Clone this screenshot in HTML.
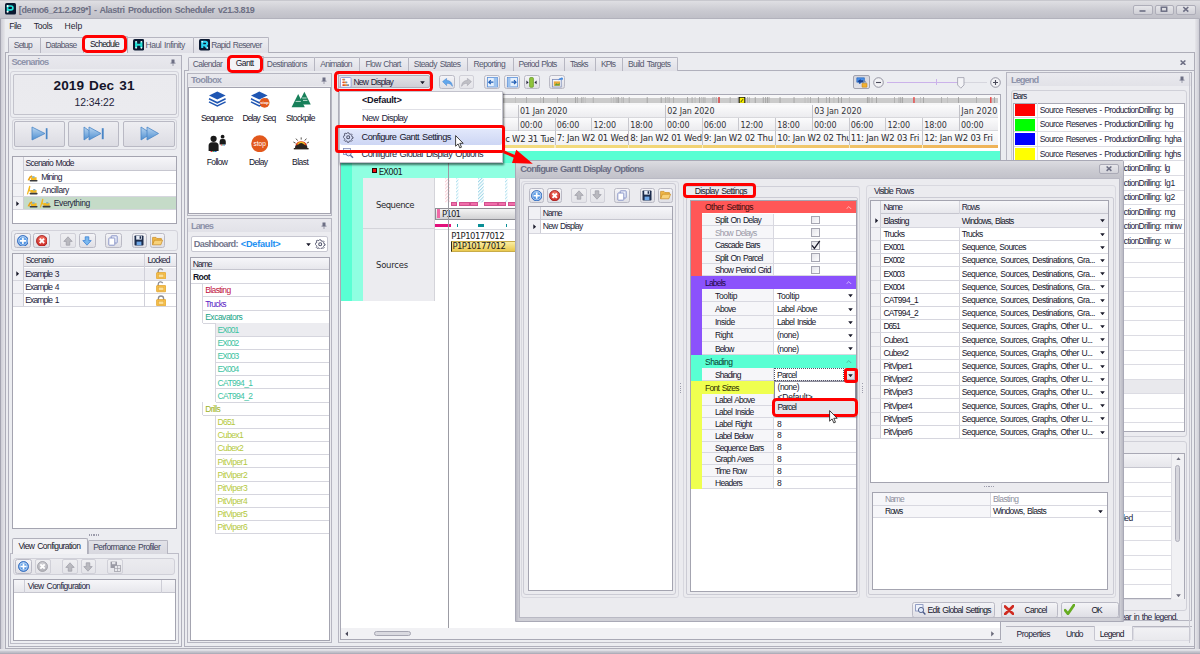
<!DOCTYPE html>
<html><head><meta charset="utf-8"><title>Alastri Production Scheduler</title>
<style>
html,body{margin:0;padding:0}
body{width:1200px;height:654px;overflow:hidden;position:relative;background:#ebecf0;font-family:"Liberation Sans",sans-serif;color:#23233a}
#app{position:absolute;left:0;top:0;width:1200px;height:654px;overflow:hidden}
#app div,#app span,#app svg{position:absolute;box-sizing:border-box}
.t{white-space:nowrap;letter-spacing:-0.46px;word-spacing:1.1px;color:#23233a}
.g{white-space:nowrap;font-family:"DejaVu Sans","Liberation Sans",sans-serif;letter-spacing:-0.1px;color:#2a2a2a}
.b{font-weight:bold}
.btn{background:linear-gradient(#f4f4f7,#dfdfe5);border:1px solid #babac5;border-radius:2.5px}
.btnd{background:linear-gradient(#efeff2,#e4e4e9);border:1px solid #d0d0d8;border-radius:2px}
.grid{background:#fff;border:1px solid #a4a4b0}
.hdr{background:linear-gradient(#f6f6f9,#e7e7ec);border-bottom:1px solid #c6c6cf}
.grp{border:1px solid #cfcfd8;border-radius:2px}
.pnl{border:1px solid #b6b6c1}
.tab{background:linear-gradient(#eeeef2,#dfdfe6);border:1px solid #b6b6c1;border-bottom:none;border-radius:1.5px 1.5px 0 0}
.taba{background:#f3f3f6;border:1px solid #b0b0bb;border-bottom:none;border-radius:2px 2px 0 0}
.red{border:3px solid #ff0000;border-radius:4px}
</style></head><body><div id="app">
<div style="left:0px;top:0px;width:1200px;height:19px;background:linear-gradient(#dfdfe3,#c9c9d0 60%,#c0c0c8);border-bottom:1px solid #b2b2bc;border-top:1px solid #c8c8ce"></div>
<div style="left:0px;top:19px;width:5px;height:635px;background:linear-gradient(90deg,#a4a4b0 0,#a4a4b0 1px,#cfcfd7 1.2px,#e6e6ea 100%)"></div>
<div style="left:1195px;top:19px;width:5px;height:635px;background:linear-gradient(270deg,#a4a4b0 0,#a4a4b0 1px,#cfcfd7 1.2px,#e6e6ea 100%)"></div>
<div style="left:0px;top:648.6px;width:1200px;height:5.4px;background:linear-gradient(#e6e6ea 0,#e2e2e8 25%,#c4c4cd 55%,#bcbcc6 78%,#a2a2ae 100%)"></div>
<svg style="left:5px;top:3.3px;" width="11" height="11.5" viewBox="0 0 11 11.5"><rect x="0" y="0" width="11" height="11.5" rx="1.6" fill="#0a1830"/><path d="M2.6 8.8V3h3.4a1.9 1.9 0 0 1 0 3.8H3.4" fill="none" stroke="#22e6de" stroke-width="1.7"/><circle cx="2.6" cy="3" r="1" fill="#fff"/><circle cx="2.6" cy="8.7" r="1" fill="#fff"/></svg>
<span class="t b" style="left:18.8px;top:5px;font-size:9px;line-height:10px;color:#6d6f84;letter-spacing:-0.39px;">[demo6_21.2.829*] - Alastri Production Scheduler v21.3.819</span>
<div style="left:1133px;top:4.5px;width:19.5px;height:10px;background:linear-gradient(#e6e6ea,#cfcfd6);border:1px solid #aeaeb9;border-radius:2px"></div>
<div style="left:1154.5px;top:4.5px;width:19.5px;height:10px;background:linear-gradient(#e6e6ea,#cfcfd6);border:1px solid #aeaeb9;border-radius:2px"></div>
<div style="left:1176px;top:4.5px;width:19.5px;height:10px;background:linear-gradient(#e6e6ea,#cfcfd6);border:1px solid #aeaeb9;border-radius:2px"></div>
<svg style="left:1133px;top:4px" width="63" height="11" viewBox="0 0 63 11"><rect x="6.5" y="6.2" width="6" height="1.6" fill="#6d6f84"/><rect x="28.3" y="3.2" width="5.4" height="4" fill="none" stroke="#6d6f84" stroke-width="1.5"/><path d="M50.3 3l5 4.6M55.3 3l-5 4.6" stroke="#6d6f84" stroke-width="1.6"/></svg>
<span class="t" style="left:9.2px;top:21px;font-size:8.6px;line-height:10px;color:#1f1f33;letter-spacing:-0.52px;">File</span>
<span class="t" style="left:33.7px;top:21px;font-size:8.6px;line-height:10px;color:#1f1f33;letter-spacing:-0.27px;">Tools</span>
<span class="t" style="left:64.5px;top:21px;font-size:8.6px;line-height:10px;color:#1f1f33;letter-spacing:0px;">Help</span>
<div style="left:5px;top:52px;width:1190px;height:597px;border:1px solid #adadb8;background:#ebecf0"></div>
<div class="tab" style="left:7.5px;top:37px;width:33.1px;height:16px"></div>
<div class="tab" style="left:39.8px;top:37px;width:43.8px;height:16px"></div>
<div class="tab" style="left:127px;top:37px;width:66.6px;height:16px"></div>
<div class="tab" style="left:192.8px;top:37px;width:76.6px;height:16px"></div>
<div class="taba" style="left:82.8px;top:36px;width:44.8px;height:17px"></div>
<span class="t" style="left:13.8px;top:40px;font-size:8.5px;line-height:10px;color:#55586e;letter-spacing:-0.83px;">Setup</span>
<span class="t" style="left:45.5px;top:40px;font-size:8.5px;line-height:10px;color:#55586e;letter-spacing:-0.67px;">Database</span>
<span class="t" style="left:90px;top:39px;font-size:8.5px;line-height:10px;color:#15152a;letter-spacing:-0.82px;">Schedule</span>
<span class="t" style="left:145.5px;top:40px;font-size:8.5px;line-height:10px;color:#55586e;letter-spacing:-0.48px;">Haul Infinity</span>
<span class="t" style="left:211.3px;top:40px;font-size:8.5px;line-height:10px;color:#55586e;letter-spacing:-0.71px;">Rapid Reserver</span>
<svg style="left:132.5px;top:39px;" width="11.5" height="11.5" viewBox="0 0 11.5 11.5"><rect width="11.5" height="11.5" rx="1.8" fill="#0a1830"/><path d="M3.1 2.6v6.4M8.4 2.6v6.4M3.1 5.8h5.3" stroke="#22e2d8" stroke-width="2.1" fill="none"/><circle cx="3.1" cy="2.7" r="0.8" fill="#fff"/><circle cx="8.4" cy="2.7" r="0.8" fill="#fff"/><circle cx="3.1" cy="8.9" r="0.8" fill="#fff"/><circle cx="8.4" cy="8.9" r="0.8" fill="#fff"/></svg>
<svg style="left:198.8px;top:39px;" width="11.5" height="11.5" viewBox="0 0 11.5 11.5"><rect width="11.5" height="11.5" rx="1.8" fill="#0a1830"/><path d="M3.2 9V2.8h3.2a1.7 1.7 0 0 1 0 3.4H3.6M5.6 6l2.8 3" stroke="#2ed4f2" stroke-width="2.1" fill="none"/><circle cx="3.2" cy="2.8" r="0.8" fill="#fff"/><circle cx="8.4" cy="9" r="0.8" fill="#fff"/></svg>
<div class="red" style="left:81.8px;top:34.5px;width:45.2px;height:18.8px;border-width:3.7px;border-radius:5px"></div>
<div style="left:7.5px;top:55px;width:174.5px;height:592px;border:1px solid #b0b0bc;background:#ecedf1"></div>
<div style="left:8.5px;top:56px;width:172.5px;height:13px;background:linear-gradient(#e9e9ee,#e3e3e9)"></div>
<span class="t b" style="left:11.4px;top:57px;font-size:9.3px;line-height:10px;color:#8e93aa;letter-spacing:-0.82px;">Scenarios</span>
<svg style="left:169.5px;top:59px;" width="6" height="7" viewBox="0 0 6 7"><path d="M1.5 0.5h3v3.2h1v0.9H3.3V7h-0.6V4.6H0.5V3.7h1z" fill="#6d6f84"/></svg>
<div style="left:10px;top:71px;width:168.5px;height:46.5px;border:1px solid #d3d3db;border-radius:3px"></div>
<div style="left:12.6px;top:73.5px;width:164px;height:41.9px;border:1px solid #c3c3cc;border-radius:2px;background:linear-gradient(#eaeaee,#ebebef)"></div>
<span class="t b" style="left:53.5px;top:78px;font-size:13.6px;line-height:15px;color:#15152a;letter-spacing:0.09px;">2019 Dec 31</span>
<span class="t" style="left:74.5px;top:97px;font-size:10.4px;line-height:11px;color:#23233a;letter-spacing:-0.06px;">12:34:22</span>
<div style="left:11.5px;top:118.5px;width:165.5px;height:31px;border:1px solid #d3d3db;border-radius:3px"></div>
<div style="left:14.3px;top:120.6px;width:50.5px;height:26.2px;background:linear-gradient(#eeeef2,#dcdce3);border:1px solid #b9b9c4;border-radius:2px"></div>
<div style="left:68.1px;top:120.6px;width:51px;height:26.2px;background:linear-gradient(#eeeef2,#dcdce3);border:1px solid #b9b9c4;border-radius:2px"></div>
<div style="left:122.5px;top:120.6px;width:52.1px;height:26.2px;background:linear-gradient(#eeeef2,#dcdce3);border:1px solid #b9b9c4;border-radius:2px"></div>
<svg style="left:31px;top:126px;" width="18" height="15" viewBox="0 0 18 15"><defs><linearGradient id="pb" x1="0" y1="0" x2="0" y2="1"><stop offset="0" stop-color="#b9d6f2"/><stop offset="1" stop-color="#4f8fd0"/></linearGradient></defs><path d="M1 1l13 6.5L1 14z" fill="url(#pb)" stroke="#4a86c6" stroke-width="0.8"/><rect x="14.8" y="2.2" width="1.7" height="11" fill="#4a86c6"/></svg>
<svg style="left:83px;top:126px;" width="22" height="15" viewBox="0 0 22 15"><path d="M1 1l9 6.5L1 14z" fill="url(#pb)" stroke="#4a86c6" stroke-width="0.8"/><path d="M6 1l12 6.5L6 14z" fill="url(#pb)" stroke="#4a86c6" stroke-width="0.8"/><rect x="18.8" y="2.2" width="1.9" height="11" fill="#4a86c6"/></svg>
<svg style="left:140px;top:126px;" width="20" height="15" viewBox="0 0 20 15"><path d="M1 1l10 6.5L1 14z" fill="url(#pb)" stroke="#4a86c6" stroke-width="0.8"/><path d="M7 1l11.5 6.5L7 14z" fill="url(#pb)" stroke="#4a86c6" stroke-width="0.8"/></svg>
<div class="grid" style="left:12px;top:156px;width:165px;height:68px"></div>
<div class="hdr" style="left:13px;top:157px;width:163px;height:13.5px"></div>
<div style="left:13px;top:157px;width:10.6px;height:52.5px;background:#f1f1f5;border-right:1px solid #cdcdd6"></div>
<div style="left:13px;top:182.8px;width:163px;height:1px;background:#d6d6de"></div>
<div style="left:13px;top:195.8px;width:163px;height:1px;background:#d6d6de"></div>
<div style="left:13px;top:208.8px;width:163px;height:1px;background:#d6d6de"></div>
<div style="left:23.6px;top:196.8px;width:152.4px;height:12.2px;background:#c5dbc8"></div>
<span class="t" style="left:25.6px;top:158px;font-size:8.5px;line-height:10px;letter-spacing:-0.78px;">Scenario Mode</span>
<span class="t" style="left:41.2px;top:172px;font-size:8.5px;line-height:10px;letter-spacing:-0.77px;">Mining</span>
<span class="t" style="left:41.3px;top:185px;font-size:8.5px;line-height:10px;letter-spacing:-0.53px;">Ancillary</span>
<span class="t" style="left:53.8px;top:198px;font-size:8.5px;line-height:10px;letter-spacing:-0.42px;">Everything</span>
<svg style="left:27px;top:173.5px;" width="11" height="8" viewBox="0 0 11 8"><path d="M0.5 6.2l2-3.6 2.2-1.4 1 1.2-1.8 1-1.6 3z" fill="#e8a21a"/><rect x="4" y="3.2" width="5.6" height="2.8" fill="#f2b822"/><rect x="5.2" y="2.2" width="2.4" height="1.6" fill="#7fb0c8"/><rect x="2.6" y="6" width="8" height="1.6" rx="0.8" fill="#3a3a3a"/></svg>
<svg style="left:26px;top:185px;" width="12" height="10" viewBox="0 0 12 10"><path d="M0.8 9.2L3.2 0.8l1.2 0.3-0.6 4 2 0.8-0.4 1.2-2.4-0.8-1 3.2z" fill="#f2b822"/><rect x="4.6" y="5" width="6" height="2.8" fill="#f2b822"/><rect x="7.2" y="4" width="2.2" height="1.6" fill="#7fb0c8"/><rect x="3.6" y="7.8" width="8" height="1.7" rx="0.8" fill="#3a3a3a"/></svg>
<svg style="left:27px;top:199.5px;" width="11" height="8" viewBox="0 0 11 8"><path d="M0.5 6.2l2-3.6 2.2-1.4 1 1.2-1.8 1-1.6 3z" fill="#e8a21a"/><rect x="4" y="3.2" width="5.6" height="2.8" fill="#f2b822"/><rect x="5.2" y="2.2" width="2.4" height="1.6" fill="#7fb0c8"/><rect x="2.6" y="6" width="8" height="1.6" rx="0.8" fill="#3a3a3a"/></svg>
<svg style="left:38.6px;top:198px;" width="12" height="10" viewBox="0 0 12 10"><path d="M0.8 9.2L3.2 0.8l1.2 0.3-0.6 4 2 0.8-0.4 1.2-2.4-0.8-1 3.2z" fill="#f2b822"/><rect x="4.6" y="5" width="6" height="2.8" fill="#f2b822"/><rect x="7.2" y="4" width="2.2" height="1.6" fill="#7fb0c8"/><rect x="3.6" y="7.8" width="8" height="1.7" rx="0.8" fill="#3a3a3a"/></svg>
<svg style="left:16.4px;top:200.6px;" width="3.4" height="5.4" viewBox="0 0 3.4 5.4"><path d="M0.3 0.2l2.8 2.5-2.8 2.5z" fill="#1a1a2a"/></svg>
<div style="left:11px;top:230.4px;width:166.5px;height:20.9px;border:1px solid #d3d3db;border-radius:3px"></div>
<div class="btn" style="left:14.3px;top:233.3px;width:16.5px;height:14.4px"></div>
<svg style="left:16.6px;top:234.6px;" width="11.8" height="11.8" viewBox="0 0 11.8 11.8"><defs><radialGradient id="gp1" cx="0.5" cy="0.35" r="0.75"><stop offset="0" stop-color="#7ab4f0"/><stop offset="1" stop-color="#2c74d2"/></radialGradient></defs><circle cx="5.9" cy="5.9" r="5.4" fill="url(#gp1)" stroke="#245fb6" stroke-width="0.8"/><circle cx="5.9" cy="5.9" r="4.25" fill="none" stroke="#fff" stroke-opacity="0.8" stroke-width="0.7"/><path d="M2.8 5.9h6.2M5.9 2.8v6.2" stroke="#fff" stroke-width="1.6"/></svg>
<div class="btn" style="left:33.3px;top:233.3px;width:16.6px;height:14.4px"></div>
<svg style="left:35.7px;top:234.6px;" width="11.8" height="11.8" viewBox="0 0 11.8 11.8"><defs><radialGradient id="gx2" cx="0.5" cy="0.3" r="0.8"><stop offset="0" stop-color="#f47a68"/><stop offset="1" stop-color="#c41a1a"/></radialGradient></defs><circle cx="5.9" cy="5.9" r="5.4" fill="url(#gx2)" stroke="#a01212" stroke-width="0.8"/><path d="M3.7 3.7l4.4 4.4M8.1 3.7l-4.4 4.4" stroke="#fff" stroke-width="1.9"/></svg>
<div class="btnd" style="left:59.7px;top:233.3px;width:16.1px;height:14.4px"></div>
<svg style="left:62.8px;top:235.5px;" width="10" height="10" viewBox="0 0 10 10"><path d="M5 0.8l4.2 4.6H6.8v3.8H3.2V5.4H0.8z" fill="#b9b9bf" stroke="#9c9ca6" stroke-width="0.7"/></svg>
<div class="btn" style="left:79px;top:233.3px;width:16.6px;height:14.4px"></div>
<svg style="left:82.3px;top:235.5px;" width="10" height="10" viewBox="0 0 10 10"><path d="M5 9.2L0.8 4.6h2.4V0.8h3.6v3.8h2.4z" fill="#7ab8ee" stroke="#2f79d2" stroke-width="0.7"/></svg>
<div class="btn" style="left:105px;top:233.3px;width:16.5px;height:14.4px"></div>
<svg style="left:108.3px;top:235px;" width="10" height="11" viewBox="0 0 10 11"><rect x="3.2" y="0.8" width="6" height="7.2" rx="0.6" fill="#eef1fa" stroke="#7f8cc4" stroke-width="0.9"/><rect x="0.8" y="3" width="6" height="7.2" rx="0.6" fill="#ffffff" stroke="#7f8cc4" stroke-width="0.9"/></svg>
<div class="btn" style="left:132px;top:233.3px;width:14.8px;height:14.4px"></div>
<svg style="left:134.4px;top:235px;" width="10" height="11" viewBox="0 0 10 11"><rect x="0.5" y="0.5" width="9" height="10" rx="0.8" fill="#1c2c4c"/><rect x="2.2" y="0.8" width="5.6" height="3.8" fill="#e8eef8"/><rect x="2.6" y="6.6" width="4.8" height="3.6" fill="#6fa8e8"/><rect x="5.6" y="1.2" width="1.4" height="2.6" fill="#1c2c4c"/></svg>
<div class="btn" style="left:149.7px;top:233.3px;width:15.2px;height:14.4px"></div>
<svg style="left:151.8px;top:235.5px;" width="11" height="10" viewBox="0 0 11 10"><path d="M0.6 8.8V1.4h3.4l1 1.2h4.4v1.6" fill="#f0b848" stroke="#c88a20" stroke-width="0.7"/><path d="M0.6 8.8L2.4 4.2h8.2L8.8 8.8z" fill="#f8d27a" stroke="#c88a20" stroke-width="0.7"/></svg>
<div class="grid" style="left:12px;top:253px;width:165px;height:275.5px"></div>
<div class="hdr" style="left:13px;top:254px;width:163px;height:13.4px"></div>
<div style="left:13px;top:254px;width:10.6px;height:52.5px;background:#f1f1f5;border-right:1px solid #cdcdd6"></div>
<div style="left:23.6px;top:267.6px;width:152.4px;height:12.4px;background:#ececf1"></div>
<div style="left:13px;top:279.8px;width:163px;height:1px;background:#d6d6de"></div>
<div style="left:13px;top:292.9px;width:163px;height:1px;background:#d6d6de"></div>
<div style="left:13px;top:305.9px;width:163px;height:1px;background:#d6d6de"></div>
<div style="left:144px;top:254px;width:1px;height:52.5px;background:#d0d0d9"></div>
<span class="t" style="left:25.7px;top:255px;font-size:8.5px;line-height:10px;letter-spacing:-0.75px;">Scenario</span>
<span class="t" style="left:147.5px;top:255px;font-size:8.5px;line-height:10px;letter-spacing:-0.9px;">Locked</span>
<span class="t" style="left:25.2px;top:269px;font-size:8.5px;line-height:10px;letter-spacing:-0.86px;">Example 3</span>
<span class="t" style="left:25.2px;top:282px;font-size:8.5px;line-height:10px;letter-spacing:-0.86px;">Example 4</span>
<span class="t" style="left:25.2px;top:295px;font-size:8.5px;line-height:10px;letter-spacing:-0.86px;">Example 1</span>
<svg style="left:16.4px;top:271.3px;" width="3.4" height="5.4" viewBox="0 0 3.4 5.4"><path d="M0.3 0.2l2.8 2.5-2.8 2.5z" fill="#1a1a2a"/></svg>
<svg style="left:156px;top:268px;" width="10.4" height="11.4" viewBox="0 0 10.4 11.4"><path d="M2.2 5.2V3.2a2.4 2.4 0 0 1 4.5-1.1" fill="none" stroke="#8c8c92" stroke-width="1.3"/><rect x="0.6" y="4.6" width="9.2" height="6.2" rx="0.6" fill="#f7c04c" stroke="#dc9c20" stroke-width="0.7"/><rect x="2.6" y="6.2" width="5.2" height="3" fill="#fbe09a" stroke="#e0a838" stroke-width="0.5"/></svg>
<svg style="left:156px;top:281.2px;" width="10.4" height="11.4" viewBox="0 0 10.4 11.4"><path d="M2.2 5.2V3.2a2.4 2.4 0 0 1 4.5-1.1" fill="none" stroke="#8c8c92" stroke-width="1.3"/><rect x="0.6" y="4.6" width="9.2" height="6.2" rx="0.6" fill="#f7c04c" stroke="#dc9c20" stroke-width="0.7"/><rect x="2.6" y="6.2" width="5.2" height="3" fill="#fbe09a" stroke="#e0a838" stroke-width="0.5"/></svg>
<svg style="left:156px;top:294.6px;" width="10.4" height="11.4" viewBox="0 0 10.4 11.4"><path d="M2.4 5.2V3.6a2.6 2.6 0 0 1 5.2 0v1.6" fill="none" stroke="#8c8c92" stroke-width="1.3"/><rect x="0.6" y="4.6" width="9.2" height="6.2" rx="0.6" fill="#f7c04c" stroke="#dc9c20" stroke-width="0.7"/><rect x="2.6" y="6.2" width="5.2" height="3" fill="#fbe09a" stroke="#e0a838" stroke-width="0.5"/></svg>
<div style="left:89px;top:534.4px;width:1.2px;height:1.2px;background:#9c9cab"></div>
<div style="left:91.2px;top:534.4px;width:1.2px;height:1.2px;background:#9c9cab"></div>
<div style="left:93.4px;top:534.4px;width:1.2px;height:1.2px;background:#9c9cab"></div>
<div style="left:95.6px;top:534.4px;width:1.2px;height:1.2px;background:#9c9cab"></div>
<div style="left:97.8px;top:534.4px;width:1.2px;height:1.2px;background:#9c9cab"></div>
<div style="left:10.2px;top:553.4px;width:168.8px;height:91px;border:1px solid #bdbdc8;background:#edeef2"></div>
<div class="tab" style="left:87.7px;top:540px;width:80px;height:14px;background:linear-gradient(#e2e2e8,#d8d8df)"></div>
<div class="taba" style="left:12.3px;top:538.4px;width:75.6px;height:16px;background:#f2f2f5"></div>
<span class="t" style="left:18.4px;top:541px;font-size:8.5px;line-height:10px;color:#15152a;letter-spacing:-0.57px;">View Configuration</span>
<span class="t" style="left:93.2px;top:542px;font-size:8.5px;line-height:10px;color:#3c3f58;letter-spacing:-0.6px;">Performance Profiler</span>
<div style="left:13.3px;top:557.9px;width:162px;height:17.6px;border:1px solid #d0d0d8;border-radius:3px;background:linear-gradient(#ebebef,#e5e5ea)"></div>
<div class="btn" style="left:15.4px;top:559.3px;width:16.4px;height:14.5px"></div>
<svg style="left:18.1px;top:561px;" width="11" height="11" viewBox="0 0 11 11"><defs><radialGradient id="gp3" cx="0.5" cy="0.35" r="0.75"><stop offset="0" stop-color="#7ab4f0"/><stop offset="1" stop-color="#2c74d2"/></radialGradient></defs><circle cx="5.5" cy="5.5" r="5" fill="url(#gp3)" stroke="#245fb6" stroke-width="0.8"/><circle cx="5.5" cy="5.5" r="3.85" fill="none" stroke="#fff" stroke-opacity="0.8" stroke-width="0.7"/><path d="M2.4 5.5h6.2M5.5 2.4v6.2" stroke="#fff" stroke-width="1.6"/></svg>
<div class="btnd" style="left:34.8px;top:559.3px;width:16px;height:14.5px"></div>
<svg style="left:37.3px;top:561px;" width="11" height="11" viewBox="0 0 11 11"><defs><radialGradient id="gx4" cx="0.5" cy="0.3" r="0.8"><stop offset="0" stop-color="#d4d4d8"/><stop offset="1" stop-color="#a8a8b0"/></radialGradient></defs><circle cx="5.5" cy="5.5" r="5" fill="url(#gx4)" stroke="#9a9aa2" stroke-width="0.8"/><path d="M3.3 3.3l4.4 4.4M7.7 3.3l-4.4 4.4" stroke="#fff" stroke-width="1.9"/></svg>
<div class="btnd" style="left:61.5px;top:559.3px;width:16px;height:14.5px"></div>
<svg style="left:64.5px;top:561.5px;" width="10" height="10" viewBox="0 0 10 10"><path d="M5 0.8l4.2 4.6H6.8v3.8H3.2V5.4H0.8z" fill="#b9b9bf" stroke="#9c9ca6" stroke-width="0.7"/></svg>
<div class="btnd" style="left:80.5px;top:559.3px;width:15.8px;height:14.5px"></div>
<svg style="left:83.4px;top:561.5px;" width="10" height="10" viewBox="0 0 10 10"><path d="M5 9.2L0.8 4.6h2.4V0.8h3.6v3.8h2.4z" fill="#b9b9bf" stroke="#9c9ca6" stroke-width="0.7"/></svg>
<div class="btnd" style="left:107px;top:559.3px;width:16.4px;height:14.5px"></div>
<svg style="left:110px;top:561px;" width="11" height="11" viewBox="0 0 11 11"><rect x="0.6" y="0.6" width="6.4" height="6.4" fill="#9a9aa4"/><rect x="2" y="1" width="3.4" height="2.2" fill="#e4e4e8"/><rect x="4.6" y="4.6" width="5.8" height="5.8" fill="#e8e8ec" stroke="#9a9aa4" stroke-width="0.7"/><path d="M7.5 4.6v5.8M4.6 7.5h5.8" stroke="#9a9aa4" stroke-width="0.6"/></svg>
<div class="grid" style="left:13.3px;top:579.4px;width:162.3px;height:61.2px"></div>
<div class="hdr" style="left:14.3px;top:580.4px;width:160.3px;height:13px"></div>
<div style="left:24.4px;top:580.4px;width:1px;height:13px;background:#cdcdd6"></div>
<div style="left:160.5px;top:580.4px;width:1px;height:13px;background:#cdcdd6"></div>
<span class="t" style="left:27.7px;top:581px;font-size:8.5px;line-height:10px;letter-spacing:-0.57px;">View Configuration</span>
<div style="left:184.4px;top:70.2px;width:1010.1px;height:576.8px;border:1px solid #b0b0bc;border-right:none;background:#ebecf0"></div>
<div class="tab" style="left:187.8px;top:57px;width:41px;height:13.7px;border-radius:1.5px 1.5px 0 0;"></div>
<span class="t" style="left:192.8px;top:59px;font-size:8.5px;line-height:10px;color:#55586e;letter-spacing:-0.64px;">Calendar</span>
<div class="taba" style="left:227.8px;top:56px;width:36px;height:15px;border-radius:1.5px 1.5px 0 0;"></div>
<span class="t" style="left:235.7px;top:58px;font-size:8.5px;line-height:10px;color:#15152a;letter-spacing:-0.57px;">Gantt</span>
<div class="tab" style="left:262.8px;top:57px;width:52.4px;height:13.7px;border-radius:1.5px 1.5px 0 0;"></div>
<span class="t" style="left:266.8px;top:59px;font-size:8.5px;line-height:10px;color:#55586e;letter-spacing:-0.55px;">Destinations</span>
<div class="tab" style="left:314.2px;top:57px;width:45.6px;height:13.7px;border-radius:1.5px 1.5px 0 0;"></div>
<span class="t" style="left:320.3px;top:59px;font-size:8.5px;line-height:10px;color:#55586e;letter-spacing:-0.7px;">Animation</span>
<div class="tab" style="left:358.8px;top:57px;width:50.4px;height:13.7px;border-radius:1.5px 1.5px 0 0;"></div>
<span class="t" style="left:365.4px;top:59px;font-size:8.5px;line-height:10px;color:#55586e;letter-spacing:-0.69px;">Flow Chart</span>
<div class="tab" style="left:408.2px;top:57px;width:60px;height:13.7px;border-radius:1.5px 1.5px 0 0;"></div>
<span class="t" style="left:413.8px;top:59px;font-size:8.5px;line-height:10px;color:#55586e;letter-spacing:-0.57px;">Steady States</span>
<div class="tab" style="left:467.2px;top:57px;width:46.4px;height:13.7px;border-radius:1.5px 1.5px 0 0;"></div>
<span class="t" style="left:473.4px;top:59px;font-size:8.5px;line-height:10px;color:#55586e;letter-spacing:-0.56px;">Reporting</span>
<div class="tab" style="left:512.6px;top:57px;width:52.6px;height:13.7px;border-radius:1.5px 1.5px 0 0;"></div>
<span class="t" style="left:518.5px;top:59px;font-size:8.5px;line-height:10px;color:#55586e;letter-spacing:-0.74px;">Period Plots</span>
<div class="tab" style="left:564.2px;top:57px;width:32px;height:13.7px;border-radius:1.5px 1.5px 0 0;"></div>
<span class="t" style="left:570px;top:59px;font-size:8.5px;line-height:10px;color:#55586e;letter-spacing:-0.78px;">Tasks</span>
<div class="tab" style="left:595.2px;top:57px;width:28px;height:13.7px;border-radius:1.5px 1.5px 0 0;"></div>
<span class="t" style="left:601px;top:59px;font-size:8.5px;line-height:10px;color:#55586e;letter-spacing:-1px;">KPIs</span>
<div class="tab" style="left:622.2px;top:57px;width:56.3px;height:13.7px;border-radius:1.5px 1.5px 0 0;"></div>
<span class="t" style="left:628px;top:59px;font-size:8.5px;line-height:10px;color:#55586e;letter-spacing:-0.59px;">Build Targets</span>
<div class="red" style="left:227px;top:55.2px;width:36px;height:18.3px;border-width:3.6px;border-radius:5px"></div>
<svg style="left:1180px;top:59.5px;" width="6" height="5.4" viewBox="0 0 6 5.4"><path d="M0.6 0.5l4.8 4.4M5.4 0.5L0.6 4.9" stroke="#6d6f84" stroke-width="1.5"/></svg>
<div style="left:187px;top:72.6px;width:145.4px;height:143px;border:1px solid #b6b6c1;background:#ececf0"></div>
<div style="left:188px;top:73.6px;width:143.4px;height:12.4px;background:linear-gradient(#e9e9ee,#e2e2e8)"></div>
<span class="t b" style="left:191px;top:75px;font-size:9.3px;line-height:10px;color:#8e93aa;letter-spacing:-0.74px;">Toolbox</span>
<svg style="left:321px;top:76.5px;" width="6" height="7" viewBox="0 0 6 7"><path d="M1.5 0.5h3v3.2h1v0.9H3.3V7h-0.6V4.6H0.5V3.7h1z" fill="#6d6f84"/></svg>
<div style="left:188.4px;top:87px;width:142.4px;height:127px;background:#fff;border:1px solid #a4a4b0"></div>
<svg style="left:208.4px;top:91px;" width="18.6" height="16.6" viewBox="0 0 18.6 16.6"><path d="M9.3 0.6L17.6 4.6 9.3 8.6 1 4.6z" fill="#1f56b3"/><path d="M1 7.8l8.3 4 8.3-4M1 10.9l8.3 4 8.3-4" fill="none" stroke="#1f56b3" stroke-width="1.5"/></svg>
<svg style="left:249.8px;top:91px;" width="20" height="17" viewBox="0 0 20 17"><path d="M9.3 0.6L17.6 4.6 9.3 8.6 1 4.6z" fill="#1f56b3"/><path d="M1 7.8l8.3 4 8.3-4M1 10.9l8.3 4 8.3-4" fill="none" stroke="#1f56b3" stroke-width="1.5"/><circle cx="14.6" cy="11.8" r="4.9" fill="#e2581c"/><text x="14.6" y="13.2" font-size="4" fill="#fff" text-anchor="middle" font-family="Liberation Sans, sans-serif" font-weight="bold">stop</text></svg>
<svg style="left:291px;top:91px;" width="20.4" height="17" viewBox="0 0 20.4 17"><path d="M0.6 16.2L7.2 3l6.6 13.2z" fill="#17805a"/><path d="M9 9.4L13.4 0.8l6.4 12.6h-8.4z" fill="#17805a"/><path d="M4.6 10.4h5.2M11.2 7h4.4M12 9.4h4.4" stroke="#cfe9dd" stroke-width="0.9"/></svg>
<span class="t" style="left:200.9px;top:113px;font-size:8.5px;line-height:10px;color:#15152a;letter-spacing:-0.83px;">Sequence</span>
<span class="t" style="left:242.4px;top:113px;font-size:8.5px;line-height:10px;color:#15152a;letter-spacing:-0.82px;">Delay Seq</span>
<span class="t" style="left:286px;top:113px;font-size:8.5px;line-height:10px;color:#15152a;letter-spacing:-0.62px;">Stockpile</span>
<svg style="left:207.6px;top:133.6px;" width="19.6" height="18.6" viewBox="0 0 19.6 18.6"><circle cx="5.6" cy="4.8" r="3.1" fill="#1a1a1a"/><path d="M0.6 17v-5.2a3.6 3.6 0 0 1 3.6-3.6h2.8a3.6 3.6 0 0 1 3.6 3.6V17z" fill="#1a1a1a"/><circle cx="14.6" cy="2.7" r="1.9" fill="#1a1a1a"/><path d="M11.6 10.6V7.4a2.3 2.3 0 0 1 2.3-2.3h1.6a2.3 2.3 0 0 1 2.3 2.3v3.2z" fill="#1a1a1a"/><rect x="2.6" y="17" width="2" height="1.2" fill="#e23"/><rect x="4.6" y="17" width="2" height="1.2" fill="#3a6"/><rect x="6.6" y="17" width="2" height="1.2" fill="#36c"/><rect x="12.8" y="10.6" width="1.4" height="0.9" fill="#e23"/><rect x="14.2" y="10.6" width="1.4" height="0.9" fill="#3a6"/><rect x="15.6" y="10.6" width="1.4" height="0.9" fill="#36c"/></svg>
<svg style="left:250.6px;top:134.8px;" width="17.4" height="17.4" viewBox="0 0 17.4 17.4"><circle cx="8.7" cy="8.7" r="8.5" fill="#e2581c"/><text x="8.7" y="11" font-size="6.6" fill="#fff" text-anchor="middle" font-family="Liberation Sans, sans-serif">stop</text></svg>
<svg style="left:293px;top:137px;" width="16.4" height="12.6" viewBox="0 0 16.4 12.6"><path d="M2 11.2a6.2 6.2 0 0 1 12.4 0z" fill="#2a2420"/><path d="M3.2 8.2a5.6 5.6 0 0 1 10 0" fill="none" stroke="#d9351c" stroke-width="1.5"/><path d="M4.6 7.4a4.2 4.2 0 0 1 7.2 0" fill="none" stroke="#f0c020" stroke-width="1.1"/><path d="M8.2 0.4v2.2M3 1.6l1.6 2M13.4 1.6l-1.6 2M0.4 5l2.2 1.2M16 5l-2.2 1.2" stroke="#2a2420" stroke-width="0.8"/><rect x="0.8" y="11" width="14.8" height="1.4" fill="#2a2420"/></svg>
<span class="t" style="left:206.8px;top:157px;font-size:8.5px;line-height:10px;color:#15152a;letter-spacing:-0.67px;">Follow</span>
<span class="t" style="left:249px;top:157px;font-size:8.5px;line-height:10px;color:#15152a;letter-spacing:-0.68px;">Delay</span>
<span class="t" style="left:292px;top:157px;font-size:8.5px;line-height:10px;color:#15152a;letter-spacing:-0.48px;">Blast</span>
<div style="left:187px;top:218px;width:145.4px;height:425px;border:1px solid #b6b6c1;background:#ececf0"></div>
<div style="left:188px;top:219px;width:143.4px;height:12.8px;background:linear-gradient(#e9e9ee,#e2e2e8)"></div>
<span class="t b" style="left:191px;top:221px;font-size:9.3px;line-height:10px;color:#8e93aa;letter-spacing:-1px;">Lanes</span>
<svg style="left:321px;top:222.2px;" width="6" height="7" viewBox="0 0 6 7"><path d="M1.5 0.5h3v3.2h1v0.9H3.3V7h-0.6V4.6H0.5V3.7h1z" fill="#6d6f84"/></svg>
<div style="left:190.6px;top:236.2px;width:137.6px;height:15.4px;background:#fff;border:1px solid #c6c6d0;border-radius:2px"></div>
<span class="t b" style="left:193.8px;top:239px;font-size:9.2px;line-height:10px;color:#74778c;letter-spacing:-0.7px;">Dashboard:</span>
<span class="t b" style="left:240.8px;top:239px;font-size:9.2px;line-height:10px;color:#2390f2;letter-spacing:-0.26px;">&lt;Default&gt;</span>
<svg style="left:306.2px;top:242.6px;" width="5" height="3.4" viewBox="0 0 5 3.4"><path d="M0.2 0.2h4.6L2.5 3.2z" fill="#1a1a2a"/></svg>
<svg style="left:315.4px;top:238.6px;" width="10.4" height="10.4" viewBox="0 0 12 12"><g fill="none" stroke="#50536b" stroke-width="1.2"><circle cx="6" cy="6" r="1.7"/><path d="M6 0.8l1 0.2 0.4 1.4 1.2 0.5 1.3-0.7 1.1 1.1-0.7 1.3 0.5 1.2 1.4 0.4v1.6l-1.4 0.4-0.5 1.2 0.7 1.3-1.1 1.1-1.3-0.7-1.2 0.5-0.4 1.4H5l-0.4-1.4-1.2-0.5-1.3 0.7-1.1-1.1 0.7-1.3-0.5-1.2L-0.2 6.8V5.2l1.4-0.4 0.5-1.2L1 2.3l1.1-1.1 1.3 0.7 1.2-0.5L5 0.8z" transform="translate(0.6,0.2) scale(0.9)"/></g></svg>
<div class="grid" style="left:189.6px;top:256.6px;width:140px;height:384px"></div>
<div class="hdr" style="left:190.6px;top:257.6px;width:138px;height:12.9px"></div>
<span class="t" style="left:192.8px;top:259px;font-size:8.5px;line-height:10px;letter-spacing:-1px;">Name</span>
<div style="left:190.6px;top:283.17px;width:138px;height:1px;background:#d6d6de"></div>
<span class="t b" style="left:193px;top:272px;font-size:8.6px;line-height:10px;color:#15152a;letter-spacing:-0.66px;">Root</span>
<div style="left:202.6px;top:296.33px;width:126px;height:1px;background:#d6d6de"></div>
<div style="left:202.1px;top:283.67px;width:1px;height:13.16px;background:#d6d6de"></div>
<span class="t" style="left:205.2px;top:285px;font-size:8.5px;line-height:10px;color:#c0123c;letter-spacing:-0.61px;">Blasting</span>
<div style="left:202.6px;top:309.5px;width:126px;height:1px;background:#d6d6de"></div>
<div style="left:202.1px;top:296.83px;width:1px;height:13.16px;background:#d6d6de"></div>
<span class="t" style="left:205.2px;top:299px;font-size:8.5px;line-height:10px;color:#5a22c4;letter-spacing:-0.76px;">Trucks</span>
<div style="left:202.6px;top:322.66px;width:126px;height:1px;background:#d6d6de"></div>
<div style="left:202.1px;top:310px;width:1px;height:13.16px;background:#d6d6de"></div>
<span class="t" style="left:205.2px;top:312px;font-size:8.5px;line-height:10px;color:#17a386;letter-spacing:-0.49px;">Excavators</span>
<div style="left:215.5px;top:323.16px;width:113.1px;height:13.17px;background:#ececf0"></div>
<div style="left:215.5px;top:335.82px;width:113.1px;height:1px;background:#d6d6de"></div>
<div style="left:215px;top:323.16px;width:1px;height:13.16px;background:#d6d6de"></div>
<span class="t" style="left:217.6px;top:325px;font-size:8.5px;line-height:10px;color:#3cc3a2;letter-spacing:-1px;">EX001</span>
<div style="left:215.5px;top:348.99px;width:113.1px;height:1px;background:#d6d6de"></div>
<div style="left:215px;top:336.32px;width:1px;height:13.16px;background:#d6d6de"></div>
<span class="t" style="left:217.6px;top:338px;font-size:8.5px;line-height:10px;color:#3cc3a2;letter-spacing:-1px;">EX002</span>
<div style="left:215.5px;top:362.16px;width:113.1px;height:1px;background:#d6d6de"></div>
<div style="left:215px;top:349.49px;width:1px;height:13.16px;background:#d6d6de"></div>
<span class="t" style="left:217.6px;top:351px;font-size:8.5px;line-height:10px;color:#3cc3a2;letter-spacing:-1px;">EX003</span>
<div style="left:215.5px;top:375.32px;width:113.1px;height:1px;background:#d6d6de"></div>
<div style="left:215px;top:362.65px;width:1px;height:13.16px;background:#d6d6de"></div>
<span class="t" style="left:217.6px;top:364px;font-size:8.5px;line-height:10px;color:#3cc3a2;letter-spacing:-1px;">EX004</span>
<div style="left:215.5px;top:388.49px;width:113.1px;height:1px;background:#d6d6de"></div>
<div style="left:215px;top:375.82px;width:1px;height:13.16px;background:#d6d6de"></div>
<span class="t" style="left:217.6px;top:378px;font-size:8.5px;line-height:10px;color:#3cc3a2;letter-spacing:-0.66px;">CAT994_1</span>
<div style="left:215.5px;top:401.65px;width:113.1px;height:1px;background:#d6d6de"></div>
<div style="left:215px;top:388.99px;width:1px;height:13.16px;background:#d6d6de"></div>
<span class="t" style="left:217.6px;top:391px;font-size:8.5px;line-height:10px;color:#3cc3a2;letter-spacing:-0.66px;">CAT994_2</span>
<div style="left:202.6px;top:414.81px;width:126px;height:1px;background:#d6d6de"></div>
<div style="left:202.1px;top:402.15px;width:1px;height:13.16px;background:#d6d6de"></div>
<span class="t" style="left:205.2px;top:404px;font-size:8.5px;line-height:10px;color:#9cb21e;letter-spacing:-0.66px;">Drills</span>
<div style="left:215.5px;top:427.98px;width:113.1px;height:1px;background:#d6d6de"></div>
<div style="left:215px;top:415.31px;width:1px;height:13.16px;background:#d6d6de"></div>
<span class="t" style="left:217.6px;top:417px;font-size:8.5px;line-height:10px;color:#b4c83c;letter-spacing:-0.78px;">D651</span>
<div style="left:215.5px;top:441.15px;width:113.1px;height:1px;background:#d6d6de"></div>
<div style="left:215px;top:428.48px;width:1px;height:13.16px;background:#d6d6de"></div>
<span class="t" style="left:217.6px;top:430px;font-size:8.5px;line-height:10px;color:#b4c83c;letter-spacing:-0.64px;">Cubex1</span>
<div style="left:215.5px;top:454.31px;width:113.1px;height:1px;background:#d6d6de"></div>
<div style="left:215px;top:441.64px;width:1px;height:13.16px;background:#d6d6de"></div>
<span class="t" style="left:217.6px;top:443px;font-size:8.5px;line-height:10px;color:#b4c83c;letter-spacing:-0.64px;">Cubex2</span>
<div style="left:215.5px;top:467.48px;width:113.1px;height:1px;background:#d6d6de"></div>
<div style="left:215px;top:454.81px;width:1px;height:13.16px;background:#d6d6de"></div>
<span class="t" style="left:217.6px;top:457px;font-size:8.5px;line-height:10px;color:#b4c83c;letter-spacing:-0.54px;">PitViper1</span>
<div style="left:215.5px;top:480.64px;width:113.1px;height:1px;background:#d6d6de"></div>
<div style="left:215px;top:467.98px;width:1px;height:13.16px;background:#d6d6de"></div>
<span class="t" style="left:217.6px;top:470px;font-size:8.5px;line-height:10px;color:#b4c83c;letter-spacing:-0.54px;">PitViper2</span>
<div style="left:215.5px;top:493.81px;width:113.1px;height:1px;background:#d6d6de"></div>
<div style="left:215px;top:481.14px;width:1px;height:13.16px;background:#d6d6de"></div>
<span class="t" style="left:217.6px;top:483px;font-size:8.5px;line-height:10px;color:#b4c83c;letter-spacing:-0.54px;">PitViper3</span>
<div style="left:215.5px;top:506.97px;width:113.1px;height:1px;background:#d6d6de"></div>
<div style="left:215px;top:494.3px;width:1px;height:13.16px;background:#d6d6de"></div>
<span class="t" style="left:217.6px;top:496px;font-size:8.5px;line-height:10px;color:#b4c83c;letter-spacing:-0.54px;">PitViper4</span>
<div style="left:215.5px;top:520.13px;width:113.1px;height:1px;background:#d6d6de"></div>
<div style="left:215px;top:507.47px;width:1px;height:13.16px;background:#d6d6de"></div>
<span class="t" style="left:217.6px;top:509px;font-size:8.5px;line-height:10px;color:#b4c83c;letter-spacing:-0.54px;">PitViper5</span>
<div style="left:215.5px;top:533.3px;width:113.1px;height:1px;background:#d6d6de"></div>
<div style="left:215px;top:520.63px;width:1px;height:13.16px;background:#d6d6de"></div>
<span class="t" style="left:217.6px;top:522px;font-size:8.5px;line-height:10px;color:#b4c83c;letter-spacing:-0.54px;">PitViper6</span>
<div style="left:338px;top:72.4px;width:663.6px;height:570.6px;border:1px solid #b6b6c1;border-bottom:1.6px solid #bebec7;border-top:none;border-right:none;background:#ecedf1"></div>
<div style="left:338px;top:75.3px;width:91.8px;height:12.9px;background:linear-gradient(#e2e2e7,#cfcfd6);border:1px solid #b0b0bb;border-radius:2px"></div>
<svg style="left:340.2px;top:77.2px;" width="11.6" height="10.8" viewBox="0 0 11.6 10.8"><defs><linearGradient id="nb" x1="0" x2="1"><stop offset="0" stop-color="#d8281c"/><stop offset="0.5" stop-color="#f09030"/><stop offset="1" stop-color="#3f8ee0"/></linearGradient></defs><rect x="0.5" y="0.5" width="10.6" height="9.8" rx="1" fill="#fdfdff" stroke="#8f9cd6" stroke-width="0.9"/><rect x="2.4" y="1.8" width="2.8" height="1.6" rx="0.6" fill="url(#nb)"/><rect x="2.4" y="4.6" width="5" height="1.6" rx="0.6" fill="url(#nb)"/><rect x="2.4" y="7.3" width="6.8" height="1.6" rx="0.6" fill="url(#nb)"/></svg>
<span class="t" style="left:353.5px;top:77px;font-size:8.5px;line-height:10px;color:#23233a;letter-spacing:-0.8px;">New Display</span>
<svg style="left:420.4px;top:80.8px;" width="5" height="3.4" viewBox="0 0 5 3.4"><path d="M0.2 0.2h4.6L2.5 3.2z" fill="#1a1a2a"/></svg>
<div class="red" style="left:333.6px;top:71px;width:99.6px;height:21.2px;border-radius:4.5px;border-width:3.5px"></div>
<div class="btn" style="left:439px;top:75px;width:16px;height:14.4px;"></div>
<svg style="left:441.5px;top:77.6px;" width="11" height="9" viewBox="0 0 11 9"><path d="M0.6 3.6L4.6 0.4v2.1c3.4 0 5.6 2 5.8 5.8-1.2-2.2-2.8-3-5.8-3v2.3z" fill="#62a8ec" stroke="#3a7fd0" stroke-width="0.5"/></svg>
<div class="btnd" style="left:458.7px;top:75px;width:15.8px;height:14.4px;"></div>
<svg style="left:461px;top:77.6px;" width="11" height="9" viewBox="0 0 11 9"><path d="M10.4 3.6L6.4 0.4v2.1c-3.4 0-5.6 2-5.8 5.8 1.2-2.2 2.8-3 5.8-3v2.3z" fill="#c0c0c6" stroke="#a4a4ae" stroke-width="0.6"/></svg>
<div class="btn" style="left:484.4px;top:75px;width:16px;height:14.4px;"></div>
<svg style="left:487px;top:77.4px;" width="11" height="10.4" viewBox="0 0 11 10.4"><rect x="0.5" y="0.5" width="10" height="9.4" fill="#e6f0fc" stroke="#5a8fd8" stroke-width="0.8"/><rect x="6.8" y="0.9" width="3.3" height="8.6" fill="#9cc2ee"/><path d="M6.4 5.2H2M3.8 3.2L1.8 5.2l2 2" stroke="#1f5cb4" stroke-width="1.2" fill="none"/></svg>
<div class="btn" style="left:504.3px;top:75px;width:15.9px;height:14.4px;"></div>
<svg style="left:506.8px;top:77.4px;" width="11" height="10.4" viewBox="0 0 11 10.4"><rect x="0.5" y="0.5" width="10" height="9.4" fill="#e6f0fc" stroke="#5a8fd8" stroke-width="0.8"/><rect x="0.9" y="0.9" width="2.6" height="8.6" fill="#9cc2ee"/><path d="M4.4 5.2h4.4M7 3.2l2 2-2 2" stroke="#1f5cb4" stroke-width="1.2" fill="none"/></svg>
<div class="btn" style="left:523.6px;top:75px;width:16.2px;height:14.4px;"></div>
<svg style="left:526.2px;top:77.2px;" width="11" height="10.8" viewBox="0 0 11 10.8"><rect x="3.6" y="0.5" width="3.8" height="9.8" rx="1" fill="#8fc43c" stroke="#5e9420" stroke-width="0.7"/><path d="M0.4 3.6l2.2 1.8-2.2 1.8zM10.6 3.6L8.4 5.4l2.2 1.8z" fill="#23233a"/></svg>
<div class="btn" style="left:549.2px;top:75px;width:16px;height:14.4px;"></div>
<svg style="left:551.6px;top:77.2px;" width="11.6" height="10.6" viewBox="0 0 11.6 10.6"><rect x="0.6" y="2.6" width="8.6" height="7.4" fill="#f4f6fb" stroke="#7d8bb8" stroke-width="0.8"/><rect x="1.8" y="4.4" width="6.2" height="4.4" fill="#e8a838"/><path d="M2.4 8.6l2-2.4 1.6 1.4 1.6-1.8v2.8z" fill="#58a03c"/><path d="M6.4 3.2c0.4-1.6 1.6-2.4 3.2-2.4V0l2 1.8-2 1.8V2.6c-1.2 0-2.2 0.2-3.2 0.6z" fill="#4a8ee0"/></svg>
<div style="left:853.3px;top:75.3px;width:16.5px;height:14.2px;background:linear-gradient(#d6d6dd,#e2e2e8);border:1px solid #a2a2ae;border-radius:2px"></div>
<svg style="left:855.8px;top:77px;" width="12" height="11" viewBox="0 0 12 11"><path d="M0.8 0.8h7.6v4.4H5.2L3.4 7V5.2H0.8z" fill="#4a90e8" stroke="#1f5cb4" stroke-width="0.6"/><path d="M1.6 4.2l3-2.2v1.2h2.6v2H4.6v1.2z" fill="#1a3f90"/><rect x="6" y="6.2" width="5" height="4" rx="0.5" fill="#f2b030" stroke="#b87a10" stroke-width="0.5"/><path d="M7.2 6.2V5.2a1.3 1.3 0 0 1 2.6 0v1" fill="none" stroke="#8a8a92" stroke-width="0.8"/></svg>
<svg style="left:872.5px;top:76.8px;" width="11" height="11" viewBox="0 0 11 11"><circle cx="5.5" cy="5.5" r="4.8" fill="#f2f2f5" stroke="#8a8a98" stroke-width="0.9"/><path d="M3 5.5h5" stroke="#4a4a5a" stroke-width="1.1"/></svg>
<div style="left:887px;top:82px;width:73px;height:1px;background:#cbb2ea"></div>
<div style="left:960px;top:82px;width:27px;height:1px;background:#d6d6de"></div>
<div style="left:936.3px;top:79.4px;width:1px;height:5.6px;background:#cbb2ea"></div>
<svg style="left:957.3px;top:77.2px;" width="7.6" height="11.8" viewBox="0 0 7.6 11.8"><path d="M0.6 0.6h6.4v7.4L3.8 11.2 0.6 8z" fill="#f4f4f7" stroke="#9c9caa" stroke-width="0.8"/></svg>
<svg style="left:990px;top:76.8px;" width="11" height="11" viewBox="0 0 11 11"><circle cx="5.5" cy="5.5" r="4.8" fill="#f2f2f5" stroke="#8a8a98" stroke-width="0.9"/><path d="M3 5.5h5M5.5 3v5" stroke="#4a4a5a" stroke-width="1.1"/></svg>
<div style="left:340.4px;top:93.6px;width:660.4px;height:546.4px;border:1px solid #a9a9b5;background:#fff"></div>
<div style="left:341.4px;top:94.6px;width:658.4px;height:10px;background:#f7f7f8"></div>
<div style="left:341.4px;top:97.6px;width:656.6px;height:5px;background:#cbcbcb"></div>
<svg style="left:504px;top:96.7px;" width="494" height="6.8" viewBox="0 0 494 6.8"><rect x="11" y="0" width="0.9" height="6.8" fill="#bdbdbd"/><rect x="22" y="0" width="0.9" height="6.8" fill="#adadad"/><rect x="36" y="0" width="0.9" height="6.8" fill="#bdbdbd"/><rect x="39" y="0" width="0.9" height="6.8" fill="#a2a2a2"/><rect x="53" y="0" width="0.9" height="6.8" fill="#adadad"/><rect x="71" y="0" width="0.9" height="6.8" fill="#a2a2a2"/><rect x="72.8" y="0" width="0.9" height="6.8" fill="#adadad"/><rect x="77.3" y="0" width="0.9" height="6.8" fill="#a2a2a2"/><rect x="79.1" y="0" width="0.9" height="6.8" fill="#bdbdbd"/><rect x="80.7" y="0" width="0.9" height="6.8" fill="#bdbdbd"/><rect x="88.7" y="0" width="0.9" height="6.8" fill="#adadad"/><rect x="106.7" y="0" width="0.9" height="6.8" fill="#bdbdbd"/><rect x="109.1" y="0" width="0.9" height="6.8" fill="#bdbdbd"/><rect x="110.7" y="0" width="0.9" height="6.8" fill="#bdbdbd"/><rect x="112.5" y="0" width="0.9" height="6.8" fill="#a2a2a2"/><rect x="114.1" y="0" width="0.9" height="6.8" fill="#a2a2a2"/><rect x="117.1" y="0" width="0.9" height="6.8" fill="#bdbdbd"/><rect x="118.7" y="0" width="0.9" height="6.8" fill="#adadad"/><rect x="124.7" y="0" width="0.9" height="6.8" fill="#adadad"/><rect x="142.7" y="0" width="0.9" height="6.8" fill="#a2a2a2"/><rect x="156.7" y="0" width="0.9" height="6.8" fill="#a2a2a2"/><rect x="161.2" y="0" width="0.9" height="6.8" fill="#adadad"/><rect x="162.8" y="0" width="0.9" height="6.8" fill="#bdbdbd"/><rect x="164.6" y="0" width="0.9" height="6.8" fill="#adadad"/><rect x="169.1" y="0" width="0.9" height="6.8" fill="#adadad"/><rect x="183.1" y="0" width="0.9" height="6.8" fill="#a2a2a2"/><rect x="187.6" y="0" width="0.9" height="6.8" fill="#adadad"/><rect x="190.6" y="0" width="0.9" height="6.8" fill="#bdbdbd"/><rect x="195.1" y="0" width="0.9" height="6.8" fill="#a2a2a2"/><rect x="196.9" y="0" width="0.9" height="6.8" fill="#bdbdbd"/><rect x="198.7" y="0" width="0.9" height="6.8" fill="#adadad"/><rect x="200.5" y="0" width="0.9" height="6.8" fill="#adadad"/><rect x="208.5" y="0" width="0.9" height="6.8" fill="#a2a2a2"/><rect x="210.1" y="0" width="0.9" height="6.8" fill="#bdbdbd"/><rect x="211.7" y="0" width="0.9" height="6.8" fill="#a2a2a2"/><rect x="214.7" y="0" width="0.9" height="6.8" fill="#a2a2a2"/><rect x="225.7" y="0" width="0.9" height="6.8" fill="#adadad"/><rect x="233.7" y="0" width="0.9" height="6.8" fill="#adadad"/><rect x="235.5" y="0" width="0.9" height="6.8" fill="#bdbdbd"/><rect x="238.5" y="0" width="0.9" height="6.8" fill="#bdbdbd"/><rect x="243" y="0" width="0.9" height="6.8" fill="#adadad"/><rect x="244.8" y="0" width="0.9" height="6.8" fill="#adadad"/><rect x="250.8" y="0" width="0.9" height="6.8" fill="#a2a2a2"/><rect x="258.8" y="0" width="0.9" height="6.8" fill="#a2a2a2"/><rect x="261.2" y="0" width="0.9" height="6.8" fill="#a2a2a2"/><rect x="263" y="0" width="0.9" height="6.8" fill="#a2a2a2"/><rect x="264.6" y="0" width="0.9" height="6.8" fill="#adadad"/><rect x="275.6" y="0" width="0.9" height="6.8" fill="#a2a2a2"/><rect x="289.6" y="0" width="0.9" height="6.8" fill="#a2a2a2"/><rect x="300.6" y="0" width="0.9" height="6.8" fill="#bdbdbd"/><rect x="303.6" y="0" width="0.9" height="6.8" fill="#bdbdbd"/><rect x="306" y="0" width="0.9" height="6.8" fill="#adadad"/><rect x="314" y="0" width="0.9" height="6.8" fill="#a2a2a2"/><rect x="322" y="0" width="0.9" height="6.8" fill="#adadad"/><rect x="325" y="0" width="0.9" height="6.8" fill="#a2a2a2"/><rect x="329.5" y="0" width="0.9" height="6.8" fill="#bdbdbd"/><rect x="334" y="0" width="0.9" height="6.8" fill="#a2a2a2"/><rect x="337" y="0" width="0.9" height="6.8" fill="#a2a2a2"/><rect x="345" y="0" width="0.9" height="6.8" fill="#bdbdbd"/><rect x="363" y="0" width="0.9" height="6.8" fill="#a2a2a2"/><rect x="364.6" y="0" width="0.9" height="6.8" fill="#a2a2a2"/><rect x="367.6" y="0" width="0.9" height="6.8" fill="#adadad"/><rect x="372.1" y="0" width="0.9" height="6.8" fill="#a2a2a2"/><rect x="390.1" y="0" width="0.9" height="6.8" fill="#adadad"/><rect x="394.6" y="0" width="0.9" height="6.8" fill="#adadad"/><rect x="396.4" y="0" width="0.9" height="6.8" fill="#a2a2a2"/><rect x="398.2" y="0" width="0.9" height="6.8" fill="#a2a2a2"/><rect x="416.2" y="0" width="0.9" height="6.8" fill="#bdbdbd"/><rect x="419.2" y="0" width="0.9" height="6.8" fill="#a2a2a2"/><rect x="437.2" y="0" width="0.9" height="6.8" fill="#adadad"/><rect x="443.2" y="0" width="0.9" height="6.8" fill="#bdbdbd"/><rect x="454.2" y="0" width="0.9" height="6.8" fill="#a2a2a2"/><rect x="472.2" y="0" width="0.9" height="6.8" fill="#adadad"/><rect x="490.2" y="0" width="0.9" height="6.8" fill="#a2a2a2"/><rect x="214.4" y="0" width="1.1" height="6.8" fill="#f02020"/><rect x="409.5" y="0" width="1.1" height="6.8" fill="#f02020"/><rect x="486.4" y="0" width="1.1" height="6.8" fill="#f02020"/><rect x="235.2" y="0.2" width="5.6" height="6.2" fill="#f8f000" stroke="#111" stroke-width="1"/><path d="M236.8 5l2.2-2.8" stroke="#111" stroke-width="0.8"/></svg>
<div style="left:341.4px;top:104.6px;width:656.4px;height:13.6px;background:linear-gradient(#fbfbfc,#ececef);border-bottom:1px solid #d8d8dc"></div>
<div style="left:341.4px;top:118.2px;width:656.4px;height:13.2px;background:linear-gradient(#fbfbfc,#ececef);border-bottom:1px solid #d8d8dc"></div>
<div style="left:341.4px;top:131.4px;width:656.4px;height:13.8px;background:linear-gradient(#fdfdfd,#f1f1f3)"></div>
<div style="left:517.8px;top:104.6px;width:1px;height:26.8px;background:#c2c2c8"></div>
<span class="g" style="left:520.1px;top:107px;font-size:8px;line-height:9px;color:#333338;letter-spacing:-0.06px;">01 Jan 2020</span>
<div style="left:664.84px;top:104.6px;width:1px;height:26.8px;background:#c2c2c8"></div>
<span class="g" style="left:667.14px;top:107px;font-size:8px;line-height:9px;color:#333338;letter-spacing:-0.06px;">02 Jan 2020</span>
<div style="left:811.88px;top:104.6px;width:1px;height:26.8px;background:#c2c2c8"></div>
<span class="g" style="left:814.18px;top:107px;font-size:8px;line-height:9px;color:#333338;letter-spacing:-0.06px;">03 Jan 2020</span>
<div style="left:958.92px;top:104.6px;width:1px;height:26.8px;background:#c2c2c8"></div>
<span class="g" style="left:961.22px;top:107px;font-size:8px;line-height:9px;color:#333338;letter-spacing:0.11px;">Jan 2020</span>
<span class="g" style="left:519.9px;top:121px;font-size:8px;line-height:9px;color:#333338;letter-spacing:-0.12px;">00:00</span>
<div style="left:554.56px;top:118.2px;width:1px;height:13.2px;background:#c8c8ce"></div>
<span class="g" style="left:556.66px;top:121px;font-size:8px;line-height:9px;color:#333338;letter-spacing:-0.12px;">06:00</span>
<div style="left:591.32px;top:118.2px;width:1px;height:13.2px;background:#c8c8ce"></div>
<span class="g" style="left:593.42px;top:121px;font-size:8px;line-height:9px;color:#333338;letter-spacing:-0.12px;">12:00</span>
<div style="left:628.08px;top:118.2px;width:1px;height:13.2px;background:#c8c8ce"></div>
<span class="g" style="left:630.18px;top:121px;font-size:8px;line-height:9px;color:#333338;letter-spacing:-0.12px;">18:00</span>
<span class="g" style="left:666.94px;top:121px;font-size:8px;line-height:9px;color:#333338;letter-spacing:-0.12px;">00:00</span>
<div style="left:701.6px;top:118.2px;width:1px;height:13.2px;background:#c8c8ce"></div>
<span class="g" style="left:703.7px;top:121px;font-size:8px;line-height:9px;color:#333338;letter-spacing:-0.12px;">06:00</span>
<div style="left:738.36px;top:118.2px;width:1px;height:13.2px;background:#c8c8ce"></div>
<span class="g" style="left:740.46px;top:121px;font-size:8px;line-height:9px;color:#333338;letter-spacing:-0.12px;">12:00</span>
<div style="left:775.12px;top:118.2px;width:1px;height:13.2px;background:#c8c8ce"></div>
<span class="g" style="left:777.22px;top:121px;font-size:8px;line-height:9px;color:#333338;letter-spacing:-0.12px;">18:00</span>
<span class="g" style="left:813.98px;top:121px;font-size:8px;line-height:9px;color:#333338;letter-spacing:-0.12px;">00:00</span>
<div style="left:848.64px;top:118.2px;width:1px;height:13.2px;background:#c8c8ce"></div>
<span class="g" style="left:850.74px;top:121px;font-size:8px;line-height:9px;color:#333338;letter-spacing:-0.12px;">06:00</span>
<div style="left:885.4px;top:118.2px;width:1px;height:13.2px;background:#c8c8ce"></div>
<span class="g" style="left:887.5px;top:121px;font-size:8px;line-height:9px;color:#333338;letter-spacing:-0.12px;">12:00</span>
<div style="left:922.16px;top:118.2px;width:1px;height:13.2px;background:#c8c8ce"></div>
<span class="g" style="left:924.26px;top:121px;font-size:8px;line-height:9px;color:#333338;letter-spacing:-0.12px;">18:00</span>
<span class="g" style="left:961.02px;top:121px;font-size:8px;line-height:9px;color:#333338;letter-spacing:-0.12px;">00:00</span>
<span class="g" style="left:505.2px;top:134px;font-size:8.5px;line-height:10px;color:#2a2a2e;letter-spacing:-0.27px;">c W2 31 Tue</span>
<div style="left:554.56px;top:131.4px;width:1px;height:16.4px;background:#c2c2c8"></div>
<div style="left:556.06px;top:131.4px;width:72.02px;height:13.6px;overflow:hidden"><span class="g" style="left:0.6px;top:2px;font-size:8.5px;line-height:10px;color:#2a2a2e;letter-spacing:-0.23px">7: Jan W2 01 Wed</span></div>
<div style="left:628.08px;top:131.4px;width:1px;height:16.4px;background:#c2c2c8"></div>
<div style="left:629.58px;top:131.4px;width:72.02px;height:13.6px;overflow:hidden"><span class="g" style="left:0.6px;top:2px;font-size:8.5px;line-height:10px;color:#2a2a2e;letter-spacing:-0.23px">8: Jan W2 01 Wed</span></div>
<div style="left:701.6px;top:131.4px;width:1px;height:16.4px;background:#c2c2c8"></div>
<div style="left:703.1px;top:131.4px;width:72.02px;height:13.6px;overflow:hidden"><span class="g" style="left:0.6px;top:2px;font-size:8.5px;line-height:10px;color:#2a2a2e;letter-spacing:-0.23px">9: Jan W2 02 Thu</span></div>
<div style="left:775.12px;top:131.4px;width:1px;height:16.4px;background:#c2c2c8"></div>
<div style="left:776.62px;top:131.4px;width:72.02px;height:13.6px;overflow:hidden"><span class="g" style="left:0.6px;top:2px;font-size:8.5px;line-height:10px;color:#2a2a2e;letter-spacing:-0.23px">10: Jan W2 02 Thu</span></div>
<div style="left:848.64px;top:131.4px;width:1px;height:16.4px;background:#c2c2c8"></div>
<div style="left:850.14px;top:131.4px;width:72.02px;height:13.6px;overflow:hidden"><span class="g" style="left:0.6px;top:2px;font-size:8.5px;line-height:10px;color:#2a2a2e;letter-spacing:-0.23px">11: Jan W2 03 Fri</span></div>
<div style="left:922.16px;top:131.4px;width:1px;height:16.4px;background:#c2c2c8"></div>
<div style="left:923.66px;top:131.4px;width:72.02px;height:13.6px;overflow:hidden"><span class="g" style="left:0.6px;top:2px;font-size:8.5px;line-height:10px;color:#2a2a2e;letter-spacing:-0.23px">12: Jan W2 03 Fri</span></div>
<div style="left:341.4px;top:145.4px;width:656.4px;height:2.6px;background:linear-gradient(90deg,#f4e08a 0%,#f2d878 45%,#f0c468 75%,#efb257 100%)"></div>
<div style="left:554.46px;top:145.4px;width:1.2px;height:2.6px;background:#f7ecc0"></div>
<div style="left:627.98px;top:145.4px;width:1.2px;height:2.6px;background:#f7ecc0"></div>
<div style="left:701.5px;top:145.4px;width:1.2px;height:2.6px;background:#f7ecc0"></div>
<div style="left:775.02px;top:145.4px;width:1.2px;height:2.6px;background:#f7ecc0"></div>
<div style="left:848.54px;top:145.4px;width:1.2px;height:2.6px;background:#f7ecc0"></div>
<div style="left:922.06px;top:145.4px;width:1.2px;height:2.6px;background:#f7ecc0"></div>
<div style="left:341.4px;top:151px;width:658.6px;height:12.2px;background:#59ffd3"></div>
<div style="left:341.4px;top:163.2px;width:10.6px;height:137.8px;background:#59ffd3"></div>
<div style="left:352px;top:163.2px;width:11.4px;height:137.8px;background:#8fffe1"></div>
<div style="left:363.4px;top:163.2px;width:636.4px;height:15px;background:#8fffe1"></div>
<div style="left:372px;top:168.2px;width:4.8px;height:4.8px;background:#f01010;border:0.7px solid #2a0606"></div>
<span class="g" style="left:378.8px;top:167px;font-size:8.5px;line-height:10px;color:#1c1c1c;letter-spacing:-0.83px;">EX001</span>
<div style="left:363.4px;top:178.2px;width:71.4px;height:50.8px;background:#ececf0;border-right:1px solid #d4d4da;border-bottom:1px solid #d4d4da"></div>
<div style="left:363.4px;top:229px;width:71.4px;height:72px;background:#ececf0;border-right:1px solid #d4d4da"></div>
<span class="g" style="left:376px;top:200px;font-size:8.5px;line-height:10px;color:#2a2a2e;letter-spacing:-0.49px;">Sequence</span>
<span class="g" style="left:376px;top:260px;font-size:8.5px;line-height:10px;color:#2a2a2e;letter-spacing:-0.24px;">Sources</span>
<div style="left:434.8px;top:228.6px;width:565px;height:1px;background:#dcdce2"></div>
<svg style="left:444.8px;top:178.4px;" width="5" height="24.4" viewBox="0 0 5 24.4"><defs><pattern id="h444" width="2.4" height="2.4" patternUnits="userSpaceOnUse" patternTransform="rotate(45)"><rect width="1" height="2.4" fill="#f9cdd6"/></pattern></defs><rect width="5" height="24.4" fill="url(#h444)"/></svg>
<svg style="left:456.4px;top:178.4px;" width="2.4" height="24.4" viewBox="0 0 2.4 24.4"><defs><pattern id="h456" width="2.4" height="2.4" patternUnits="userSpaceOnUse" patternTransform="rotate(45)"><rect width="1" height="2.4" fill="#b4e2f0"/></pattern></defs><rect width="2.4" height="24.4" fill="url(#h456)"/></svg>
<svg style="left:478.3px;top:178.4px;" width="5.7" height="24.4" viewBox="0 0 5.7 24.4"><defs><pattern id="h478" width="2.4" height="2.4" patternUnits="userSpaceOnUse" patternTransform="rotate(45)"><rect width="1" height="2.4" fill="#9fd6e8"/></pattern></defs><rect width="5.7" height="24.4" fill="url(#h478)"/></svg>
<svg style="left:505.2px;top:178.4px;" width="2.4" height="24.4" viewBox="0 0 2.4 24.4"><defs><pattern id="h505" width="2.4" height="2.4" patternUnits="userSpaceOnUse" patternTransform="rotate(45)"><rect width="1" height="2.4" fill="#b4e2f0"/></pattern></defs><rect width="2.4" height="24.4" fill="url(#h505)"/></svg>
<div style="left:450.6px;top:202.2px;width:6.4px;height:4px;background:#f06eaa;border:0.6px solid #d2508e"></div>
<div style="left:458.8px;top:202.2px;width:11.2px;height:4px;background:#f06eaa;border:0.6px solid #d2508e"></div>
<div style="left:470px;top:202.2px;width:7.7px;height:4px;background:#f06eaa;border:0.6px solid #d2508e"></div>
<div style="left:484px;top:202.2px;width:14px;height:4px;background:#f06eaa;border:0.6px solid #d2508e"></div>
<div style="left:498px;top:202.2px;width:7.9px;height:4px;background:#f06eaa;border:0.6px solid #d2508e"></div>
<div style="left:508px;top:202.2px;width:8px;height:4px;background:#f06eaa;border:0.6px solid #d2508e"></div>
<div style="left:435.2px;top:208px;width:80.8px;height:11.6px;background:linear-gradient(#f4f4f4,#d2d2d4);border:1px solid #8e8e94"></div>
<div style="left:436.8px;top:209.4px;width:3.6px;height:9px;background:#f06aa8"></div>
<span class="g" style="left:442px;top:209px;font-size:8.5px;line-height:10px;color:#1c1c1c;letter-spacing:-0.79px;">P101</span>
<div style="left:435.2px;top:223.6px;width:15.4px;height:3.2px;background:#e2107c"></div>
<div style="left:456.8px;top:223.8px;width:1px;height:2.8px;background:#0a8f96"></div>
<div style="left:478.3px;top:223.8px;width:5.3px;height:2.8px;background:#0a8f96"></div>
<div style="left:505.8px;top:223.8px;width:1.4px;height:2.8px;background:#0a8f96"></div>
<span class="g" style="left:451.2px;top:231px;font-size:8.5px;line-height:10px;color:#1c1c1c;letter-spacing:-0.55px;">P1P10177012</span>
<div style="left:450.6px;top:241.2px;width:65.4px;height:10.4px;background:linear-gradient(#faeea2,#e9c84e);border:1px solid #c9ac48;border-left:1px solid #2e2a18"></div>
<span class="g" style="left:452.4px;top:241px;font-size:8.5px;line-height:10px;color:#1c1c1c;letter-spacing:-0.55px;">P1P10177012</span>
<div style="left:448px;top:163.2px;width:1px;height:464.5px;background:#9c9ca4"></div>
<div style="left:341.4px;top:627.5px;width:658.4px;height:11.7px;background:#f1f1f4"></div>
<svg style="left:345px;top:631px;" width="3.4" height="5.6" viewBox="0 0 3.4 5.6"><path d="M3.2 0.2L0.3 2.8l2.9 2.6z" fill="#4a4a5a"/></svg>
<svg style="left:991.4px;top:631px;" width="3.4" height="5.6" viewBox="0 0 3.4 5.6"><path d="M0.2 0.2l2.9 2.6-2.9 2.6z" fill="#6a6a7a"/></svg>
<div style="left:374.3px;top:631px;width:36.7px;height:5px;background:#dadae0;border:1px solid #a6a6b2;border-radius:2.5px"></div>
<div style="left:1006.3px;top:72.4px;width:185.7px;height:548.6px;border:1px solid #b6b6c1;background:#ececf0"></div>
<div style="left:1007.3px;top:73.4px;width:183.7px;height:12.6px;background:linear-gradient(#e9e9ee,#e2e2e8)"></div>
<span class="t b" style="left:1011px;top:75px;font-size:9.3px;line-height:10px;color:#8e93aa;letter-spacing:-1px;">Legend</span>
<svg style="left:1179px;top:76.4px;" width="6" height="7" viewBox="0 0 6 7"><path d="M1.5 0.5h3v3.2h1v0.9H3.3V7h-0.6V4.6H0.5V3.7h1z" fill="#6d6f84"/></svg>
<div style="left:1010.5px;top:89.5px;width:176.5px;height:347.5px;border:1px solid #d0d0d8;border-radius:3px"></div>
<span class="t" style="left:1012.7px;top:91px;font-size:8.5px;line-height:10px;color:#23233a;letter-spacing:-1px;">Bars</span>
<div style="left:1013px;top:102.6px;width:172px;height:329.4px;background:#fff;border:1px solid #a9a9b5"></div>
<div style="left:1014px;top:116.75px;width:170px;height:1px;background:#dcdce3"></div>
<div style="left:1014px;top:131.3px;width:170px;height:1px;background:#dcdce3"></div>
<div style="left:1014px;top:145.85px;width:170px;height:1px;background:#dcdce3"></div>
<div style="left:1014px;top:160.4px;width:170px;height:1px;background:#dcdce3"></div>
<div style="left:1014px;top:174.95px;width:170px;height:1px;background:#dcdce3"></div>
<div style="left:1014px;top:189.5px;width:170px;height:1px;background:#dcdce3"></div>
<div style="left:1014px;top:204.05px;width:170px;height:1px;background:#dcdce3"></div>
<div style="left:1014px;top:218.6px;width:170px;height:1px;background:#dcdce3"></div>
<div style="left:1014px;top:233.15px;width:170px;height:1px;background:#dcdce3"></div>
<div style="left:1014px;top:247.7px;width:170px;height:1px;background:#dcdce3"></div>
<div style="left:1014px;top:262.25px;width:170px;height:1px;background:#dcdce3"></div>
<div style="left:1014px;top:276.8px;width:170px;height:1px;background:#dcdce3"></div>
<div style="left:1014px;top:291.35px;width:170px;height:1px;background:#dcdce3"></div>
<div style="left:1014px;top:305.9px;width:170px;height:1px;background:#dcdce3"></div>
<div style="left:1014px;top:320.45px;width:170px;height:1px;background:#dcdce3"></div>
<div style="left:1014px;top:335px;width:170px;height:1px;background:#dcdce3"></div>
<div style="left:1014px;top:349.55px;width:170px;height:1px;background:#dcdce3"></div>
<div style="left:1014px;top:364.1px;width:170px;height:1px;background:#dcdce3"></div>
<div style="left:1014px;top:378.65px;width:170px;height:1px;background:#dcdce3"></div>
<div style="left:1014px;top:379.65px;width:170px;height:14.05px;background:#e9e9ed"></div>
<div style="left:1014px;top:393.2px;width:170px;height:1px;background:#dcdce3"></div>
<div style="left:1014px;top:407.75px;width:170px;height:1px;background:#dcdce3"></div>
<div style="left:1014px;top:422.3px;width:170px;height:1px;background:#dcdce3"></div>
<div style="left:1014.9px;top:104px;width:20.6px;height:12.35px;background:#ff0000"></div>
<div style="left:1037.4px;top:103.2px;width:1px;height:13.55px;background:#e4e4ea"></div>
<span class="t" style="left:1039.8px;top:105px;font-size:8.5px;line-height:10px;color:#23233a;letter-spacing:-0.64px;">Source Reserves - ProductionDrilling:</span>
<span class="t" style="left:1164.6px;top:105px;font-size:8.5px;line-height:10px;color:#23233a;letter-spacing:-0.47px;">bg</span>
<div style="left:1014.9px;top:118.55px;width:20.6px;height:12.35px;background:#00ff00"></div>
<div style="left:1037.4px;top:117.75px;width:1px;height:13.55px;background:#e4e4ea"></div>
<span class="t" style="left:1039.8px;top:119px;font-size:8.5px;line-height:10px;color:#23233a;letter-spacing:-0.64px;">Source Reserves - ProductionDrilling:</span>
<span class="t" style="left:1164.6px;top:119px;font-size:8.5px;line-height:10px;color:#23233a;letter-spacing:-0.47px;">hg</span>
<div style="left:1014.9px;top:133.1px;width:20.6px;height:12.35px;background:#0000ff"></div>
<div style="left:1037.4px;top:132.3px;width:1px;height:13.55px;background:#e4e4ea"></div>
<span class="t" style="left:1039.8px;top:134px;font-size:8.5px;line-height:10px;color:#23233a;letter-spacing:-0.64px;">Source Reserves - ProductionDrilling:</span>
<span class="t" style="left:1164.6px;top:134px;font-size:8.5px;line-height:10px;color:#23233a;letter-spacing:-0.57px;">hgha</span>
<div style="left:1014.9px;top:147.65px;width:20.6px;height:12.35px;background:#ffff00"></div>
<div style="left:1037.4px;top:146.85px;width:1px;height:13.55px;background:#e4e4ea"></div>
<span class="t" style="left:1039.8px;top:149px;font-size:8.5px;line-height:10px;color:#23233a;letter-spacing:-0.64px;">Source Reserves - ProductionDrilling:</span>
<span class="t" style="left:1164.6px;top:149px;font-size:8.5px;line-height:10px;color:#23233a;letter-spacing:-0.61px;">hghs</span>
<span class="t" style="left:1039.8px;top:163px;font-size:8.5px;line-height:10px;color:#23233a;letter-spacing:-0.64px;">Source Reserves - ProductionDrilling:</span>
<span class="t" style="left:1164.6px;top:163px;font-size:8.5px;line-height:10px;color:#23233a;letter-spacing:-1px;">lg</span>
<span class="t" style="left:1039.8px;top:178px;font-size:8.5px;line-height:10px;color:#23233a;letter-spacing:-0.64px;">Source Reserves - ProductionDrilling:</span>
<span class="t" style="left:1164.6px;top:178px;font-size:8.5px;line-height:10px;color:#23233a;letter-spacing:-0.37px;">lg1</span>
<span class="t" style="left:1039.8px;top:192px;font-size:8.5px;line-height:10px;color:#23233a;letter-spacing:-0.64px;">Source Reserves - ProductionDrilling:</span>
<span class="t" style="left:1164.6px;top:192px;font-size:8.5px;line-height:10px;color:#23233a;letter-spacing:-0.37px;">lg2</span>
<span class="t" style="left:1039.8px;top:207px;font-size:8.5px;line-height:10px;color:#23233a;letter-spacing:-0.64px;">Source Reserves - ProductionDrilling:</span>
<span class="t" style="left:1164.6px;top:207px;font-size:8.5px;line-height:10px;color:#23233a;letter-spacing:-1px;">mg</span>
<span class="t" style="left:1039.8px;top:221px;font-size:8.5px;line-height:10px;color:#23233a;letter-spacing:-0.64px;">Source Reserves - ProductionDrilling:</span>
<span class="t" style="left:1164.6px;top:221px;font-size:8.5px;line-height:10px;color:#23233a;letter-spacing:-0.88px;">minw</span>
<span class="t" style="left:1039.8px;top:236px;font-size:8.5px;line-height:10px;color:#23233a;letter-spacing:-0.64px;">Source Reserves - ProductionDrilling:</span>
<span class="t" style="left:1164.6px;top:236px;font-size:8.5px;line-height:10px;color:#23233a;letter-spacing:-0.54px;">w</span>
<div style="left:1010.5px;top:440.8px;width:176.5px;height:170.2px;border:1px solid #d0d0d8;border-radius:3px"></div>
<div style="left:1013px;top:453px;width:172px;height:146.4px;background:#fff;border:1px solid #a9a9b5"></div>
<div style="left:1014px;top:454px;width:157.4px;height:13.6px;background:linear-gradient(#f4f4f7,#e6e6eb);border-bottom:1px solid #c6c6cf"></div>
<div style="left:1014px;top:481.7px;width:157.4px;height:1px;background:#dcdce3"></div>
<div style="left:1014px;top:496.3px;width:157.4px;height:1px;background:#dcdce3"></div>
<div style="left:1014px;top:510.9px;width:157.4px;height:1px;background:#dcdce3"></div>
<div style="left:1014px;top:525.5px;width:157.4px;height:1px;background:#dcdce3"></div>
<div style="left:1014px;top:540.1px;width:157.4px;height:1px;background:#dcdce3"></div>
<div style="left:1014px;top:554.7px;width:157.4px;height:1px;background:#dcdce3"></div>
<div style="left:1014px;top:569.3px;width:157.4px;height:1px;background:#dcdce3"></div>
<div style="left:1014px;top:583.9px;width:157.4px;height:1px;background:#dcdce3"></div>
<div style="left:1014px;top:598.5px;width:157.4px;height:1px;background:#dcdce3"></div>
<div style="left:1171.4px;top:454px;width:12.6px;height:144.6px;background:#f1f1f4;border-left:1px solid #e0e0e6"></div>
<div style="left:1175px;top:464.7px;width:5.2px;height:76.9px;background:#d6d6dd;border:1px solid #b0b0bc;border-radius:2.5px"></div>
<svg style="left:1175.6px;top:457px;" width="5" height="3.4" viewBox="0 0 5 3.4"><path d="M2.5 0.2l2.3 3H0.2z" fill="#6a6a7a"/></svg>
<svg style="left:1175.6px;top:593.6px;" width="5" height="3.4" viewBox="0 0 5 3.4"><path d="M0.2 0.2h4.6L2.5 3.2z" fill="#6a6a7a"/></svg>
<span class="t" style="left:1096.6px;top:513px;font-size:8.5px;line-height:10px;color:#23233a;letter-spacing:-0.52px;">Is Enabled</span>
<span class="t" style="left:1016px;top:612px;font-size:8.5px;line-height:10px;color:#23233a;letter-spacing:-0.68px;">Select the items that should appear in the legend.</span>
<div style="left:1006.3px;top:623.4px;width:185.7px;height:19.6px;background:#ececf0"></div>
<div style="left:1006.3px;top:625.6px;width:186px;height:1px;background:#b6b6c1"></div>
<div style="left:1094px;top:625.6px;width:38.8px;height:15.8px;background:#f2f2f5;border:1px solid #c6c6d0;border-top:none;border-radius:0 0 2px 2px"></div>
<span class="t" style="left:1016.6px;top:629px;font-size:8.5px;line-height:10px;color:#23233a;letter-spacing:-0.53px;">Properties</span>
<span class="t" style="left:1066px;top:629px;font-size:8.5px;line-height:10px;color:#23233a;letter-spacing:-0.91px;">Undo</span>
<span class="t" style="left:1099.7px;top:629px;font-size:8.5px;line-height:10px;color:#15152a;letter-spacing:-0.73px;">Legend</span>
<div style="left:1133.4px;top:627px;width:57.2px;height:14.2px;background:linear-gradient(#f1f1f4,#e9e9ed);border:1px solid #dcdce3;border-radius:2px"></div>
<div style="left:1189.4px;top:72.4px;width:1px;height:571px;background:#c9c9d2"></div>
<div style="left:338.6px;top:91.2px;width:164.8px;height:72px;background:#fff;border:1px solid #c2c2cc;box-shadow:1.2px 1.6px 2px rgba(0,0,0,0.55)"></div>
<span class="t b" style="left:362px;top:95px;font-size:9.2px;line-height:10px;color:#15152a;letter-spacing:-0.26px;">&lt;Default&gt;</span>
<div style="left:362px;top:109px;width:138.6px;height:1px;background:#e0e0e6"></div>
<span class="t" style="left:362px;top:113px;font-size:9.2px;line-height:10px;color:#23233a;letter-spacing:-0.62px;">New Display</span>
<div style="left:339.8px;top:129px;width:162.6px;height:16.2px;background:linear-gradient(#e2e8fb,#cdd6f4);border-radius:2px"></div>
<span class="t" style="left:361.6px;top:132px;font-size:9.2px;line-height:10px;color:#15152a;letter-spacing:-0.57px;">Configure Gantt Settings</span>
<svg style="left:343.4px;top:132.2px;" width="10.4" height="10.4" viewBox="0 0 12 12"><g fill="none" stroke="#50536b" stroke-width="1.2"><circle cx="6" cy="6" r="1.7"/><path d="M6 0.8l1 0.2 0.4 1.4 1.2 0.5 1.3-0.7 1.1 1.1-0.7 1.3 0.5 1.2 1.4 0.4v1.6l-1.4 0.4-0.5 1.2 0.7 1.3-1.1 1.1-1.3-0.7-1.2 0.5-0.4 1.4H5l-0.4-1.4-1.2-0.5-1.3 0.7-1.1-1.1 0.7-1.3-0.5-1.2L-0.2 6.8V5.2l1.4-0.4 0.5-1.2L1 2.3l1.1-1.1 1.3 0.7 1.2-0.5L5 0.8z" transform="translate(0.6,0.2) scale(0.9)"/></g></svg>
<span class="t" style="left:361.6px;top:149px;font-size:9.2px;line-height:10px;color:#23233a;letter-spacing:-0.55px;">Configure Global Display Options</span>
<svg style="left:343.4px;top:148.4px;" width="10.6" height="10.6" viewBox="0 0 10.6 10.6"><rect x="0.6" y="0.6" width="7" height="6" fill="#eef2fb" stroke="#7d8bb8" stroke-width="0.8"/><circle cx="5.6" cy="5.4" r="2.5" fill="#dfe8f8" stroke="#5a6a98" stroke-width="0.9"/><path d="M7.4 7.2l2.6 2.6" stroke="#5a6a98" stroke-width="1.4"/></svg>
<div class="red" style="left:335px;top:125.2px;width:170px;height:27.6px;border-radius:3.5px;border-width:3.5px"></div>
<div style="left:515.2px;top:159.6px;width:608.8px;height:462.2px;background:linear-gradient(90deg,#b9b9c3,#cfcfd6 3px,#cfcfd6 calc(100% - 3px),#b9b9c3);border:1px solid #a9a9b6;border-radius:2px 2px 0 0"></div>
<div style="left:516.2px;top:160.6px;width:606.8px;height:17.6px;background:linear-gradient(#dcdce1,#cbcbd2 55%,#c2c2ca)"></div>
<div style="left:519px;top:178.2px;width:601px;height:440px;background:#ebebef;border:1px solid #b9b9c4"></div>
<span class="t b" style="left:520.3px;top:163px;font-size:9.4px;line-height:11px;color:#6d6f86;letter-spacing:-0.82px;">Configure Gantt Display Options</span>
<div style="left:1099.3px;top:163.7px;width:19.7px;height:10.5px;background:linear-gradient(#e8e8ec,#d2d2d9);border:1px solid #aaaab6;border-radius:2px"></div>
<svg style="left:1106.2px;top:166.4px;" width="6" height="5.4" viewBox="0 0 6 5.4"><path d="M0.6 0.5l4.8 4.4M5.4 0.5L0.6 4.9" stroke="#6d6f84" stroke-width="1.5"/></svg>
<div style="left:521px;top:181px;width:157.6px;height:417px;border:1px solid #d8d8df;border-radius:3px"></div>
<div style="left:523.4px;top:183px;width:153px;height:412px;border:1px solid #cbcbd4;border-radius:3px"></div>
<div class="btn" style="left:528.5px;top:187.8px;width:15.3px;height:15px"></div>
<svg style="left:530.5px;top:189.6px;" width="11.4" height="11.4" viewBox="0 0 11.4 11.4"><defs><radialGradient id="gp5" cx="0.5" cy="0.35" r="0.75"><stop offset="0" stop-color="#7ab4f0"/><stop offset="1" stop-color="#2c74d2"/></radialGradient></defs><circle cx="5.7" cy="5.7" r="5.2" fill="url(#gp5)" stroke="#245fb6" stroke-width="0.8"/><circle cx="5.7" cy="5.7" r="4.05" fill="none" stroke="#fff" stroke-opacity="0.8" stroke-width="0.7"/><path d="M2.6 5.7h6.2M5.7 2.6v6.2" stroke="#fff" stroke-width="1.6"/></svg>
<div class="btn" style="left:546.7px;top:187.8px;width:15.3px;height:15px"></div>
<svg style="left:548.6px;top:189.6px;" width="11.4" height="11.4" viewBox="0 0 11.4 11.4"><defs><radialGradient id="gx6" cx="0.5" cy="0.3" r="0.8"><stop offset="0" stop-color="#f47a68"/><stop offset="1" stop-color="#c41a1a"/></radialGradient></defs><circle cx="5.7" cy="5.7" r="5.2" fill="url(#gx6)" stroke="#a01212" stroke-width="0.8"/><path d="M3.5 3.5l4.4 4.4M7.9 3.5l-4.4 4.4" stroke="#fff" stroke-width="1.9"/></svg>
<div class="btnd" style="left:571.4px;top:187.8px;width:15.2px;height:15px"></div>
<svg style="left:574px;top:190.3px;" width="10" height="10" viewBox="0 0 10 10"><path d="M5 0.8l4.2 4.6H6.8v3.8H3.2V5.4H0.8z" fill="#b9b9bf" stroke="#9c9ca6" stroke-width="0.7"/></svg>
<div class="btnd" style="left:590px;top:187.8px;width:14.9px;height:15px"></div>
<svg style="left:592.4px;top:190.3px;" width="10" height="10" viewBox="0 0 10 10"><path d="M5 9.2L0.8 4.6h2.4V0.8h3.6v3.8h2.4z" fill="#b9b9bf" stroke="#9c9ca6" stroke-width="0.7"/></svg>
<div class="btn" style="left:614.3px;top:187.8px;width:15.7px;height:15px"></div>
<svg style="left:617.2px;top:189.8px;" width="10" height="11" viewBox="0 0 10 11"><rect x="3.2" y="0.8" width="6" height="7.2" rx="0.6" fill="#eef1fa" stroke="#7f8cc4" stroke-width="0.9"/><rect x="0.8" y="3" width="6" height="7.2" rx="0.6" fill="#ffffff" stroke="#7f8cc4" stroke-width="0.9"/></svg>
<div class="btn" style="left:639.5px;top:187.8px;width:15px;height:15px"></div>
<svg style="left:642px;top:189.8px;" width="10" height="11" viewBox="0 0 10 11"><rect x="0.5" y="0.5" width="9" height="10" rx="0.8" fill="#1c2c4c"/><rect x="2.2" y="0.8" width="5.6" height="3.8" fill="#e8eef8"/><rect x="2.6" y="6.6" width="4.8" height="3.6" fill="#6fa8e8"/><rect x="5.6" y="1.2" width="1.4" height="2.6" fill="#1c2c4c"/></svg>
<div class="btn" style="left:657.7px;top:187.8px;width:15.3px;height:15px"></div>
<svg style="left:659.9px;top:190.3px;" width="11" height="10" viewBox="0 0 11 10"><path d="M0.6 8.8V1.4h3.4l1 1.2h4.4v1.6" fill="#f0b848" stroke="#c88a20" stroke-width="0.7"/><path d="M0.6 8.8L2.4 4.2h8.2L8.8 8.8z" fill="#f8d27a" stroke="#c88a20" stroke-width="0.7"/></svg>
<div class="grid" style="left:528.3px;top:206.2px;width:144.6px;height:384.6px"></div>
<div class="hdr" style="left:529.3px;top:207.2px;width:142.6px;height:12.4px"></div>
<div style="left:529.3px;top:207.2px;width:11.5px;height:26px;background:#f1f1f5;border-right:1px solid #cdcdd6"></div>
<div style="left:529.3px;top:219.2px;width:142.6px;height:1px;background:#c6c6cf"></div>
<div style="left:529.3px;top:232.8px;width:142.6px;height:1px;background:#d6d6de"></div>
<span class="t" style="left:542.8px;top:208px;font-size:8.5px;line-height:10px;letter-spacing:-1px;">Name</span>
<span class="t" style="left:542.8px;top:221px;font-size:8.5px;line-height:10px;letter-spacing:-0.79px;">New Display</span>
<svg style="left:533.4px;top:224px;" width="3.4" height="5.4" viewBox="0 0 3.4 5.4"><path d="M0.3 0.2l2.8 2.5-2.8 2.5z" fill="#1a1a2a"/></svg>
<div style="left:680.1px;top:383.4px;width:1.1px;height:1.1px;background:#9c9cab"></div>
<div style="left:680.1px;top:385.5px;width:1.1px;height:1.1px;background:#9c9cab"></div>
<div style="left:680.1px;top:387.6px;width:1.1px;height:1.1px;background:#9c9cab"></div>
<div style="left:680.1px;top:389.7px;width:1.1px;height:1.1px;background:#9c9cab"></div>
<div style="left:680.1px;top:391.8px;width:1.1px;height:1.1px;background:#9c9cab"></div>
<div style="left:861.9px;top:383.4px;width:1.1px;height:1.1px;background:#9c9cab"></div>
<div style="left:861.9px;top:385.5px;width:1.1px;height:1.1px;background:#9c9cab"></div>
<div style="left:861.9px;top:387.6px;width:1.1px;height:1.1px;background:#9c9cab"></div>
<div style="left:861.9px;top:389.7px;width:1.1px;height:1.1px;background:#9c9cab"></div>
<div style="left:861.9px;top:391.8px;width:1.1px;height:1.1px;background:#9c9cab"></div>
<div style="left:683.4px;top:186px;width:177px;height:412px;border:1px solid #d8d8df;border-radius:3px;border-top-color:#cfcfd8"></div>
<div style="left:685.6px;top:196.6px;width:172.8px;height:398.4px;border:1px solid #cbcbd4;border-radius:2px"></div>
<span class="t" style="left:694.8px;top:186px;font-size:8.5px;line-height:10px;color:#15152a;letter-spacing:-0.62px;">Display Settings</span>
<div style="left:689.8px;top:200px;width:167.2px;height:392.2px;background:#fff;border:1px solid #a4a4b0"></div>
<div style="left:690.8px;top:201px;width:165.2px;height:12.2px;background:#ff5757"></div>
<span class="t" style="left:705px;top:202px;font-size:8.5px;line-height:10px;color:#3a0c0c;letter-spacing:-0.53px;">Other Settings</span>
<svg style="left:846.4px;top:205.5px;" width="5.6" height="3.4" viewBox="0 0 5.6 3.4"><path d="M0.4 3l2.4-2.4L5.2 3" fill="none" stroke="#ffc4c4" stroke-width="0.9"/></svg>
<div style="left:690.8px;top:213.2px;width:11.4px;height:63.2px;background:#ff5757"></div>
<div style="left:702.2px;top:213.6px;width:72.2px;height:12.7px;background:#f6f6f9;border-right:1px solid #d8d8e0;border-bottom:1px solid #d8d8e0"></div>
<div style="left:774.4px;top:225.3px;width:81.6px;height:1px;background:#d8d8e0"></div>
<span class="t" style="left:715px;top:215px;font-size:8.5px;line-height:10px;color:#15152a;letter-spacing:-0.76px;">Split On Delay</span>
<div style="left:811.1px;top:215.65px;width:8.6px;height:8.6px;background:linear-gradient(135deg,#e4e4ea,#fdfdfe);border:1px solid #a6a6b2"></div>
<div style="left:702.2px;top:226.3px;width:72.2px;height:12.7px;background:#f6f6f9;border-right:1px solid #d8d8e0;border-bottom:1px solid #d8d8e0"></div>
<div style="left:774.4px;top:238px;width:81.6px;height:1px;background:#d8d8e0"></div>
<span class="t" style="left:715px;top:228px;font-size:8.5px;line-height:10px;color:#9a9aa8;letter-spacing:-0.85px;">Show Delays</span>
<div style="left:811.1px;top:228.35px;width:8.6px;height:8.6px;background:linear-gradient(135deg,#e4e4ea,#fdfdfe);border:1px solid #a6a6b2"></div>
<div style="left:702.2px;top:239px;width:72.2px;height:12.5px;background:#f6f6f9;border-right:1px solid #d8d8e0;border-bottom:1px solid #d8d8e0"></div>
<div style="left:774.4px;top:250.5px;width:81.6px;height:1px;background:#d8d8e0"></div>
<span class="t" style="left:715px;top:240px;font-size:8.5px;line-height:10px;color:#15152a;letter-spacing:-0.82px;">Cascade Bars</span>
<div style="left:811.1px;top:240.95px;width:8.6px;height:8.6px;background:linear-gradient(135deg,#e4e4ea,#fdfdfe);border:1px solid #a6a6b2"></div>
<svg style="left:811.4px;top:239.75px;" width="9.6" height="10" viewBox="0 0 9.6 10"><path d="M1 5.4l2.4 3L8.8 0.8" fill="none" stroke="#1c1c2c" stroke-width="1.3"/></svg>
<div style="left:702.2px;top:251.5px;width:72.2px;height:12.4px;background:#f6f6f9;border-right:1px solid #d8d8e0;border-bottom:1px solid #d8d8e0"></div>
<div style="left:774.4px;top:262.9px;width:81.6px;height:1px;background:#d8d8e0"></div>
<span class="t" style="left:715px;top:253px;font-size:8.5px;line-height:10px;color:#15152a;letter-spacing:-0.75px;">Split On Parcel</span>
<div style="left:811.1px;top:253.4px;width:8.6px;height:8.6px;background:linear-gradient(135deg,#e4e4ea,#fdfdfe);border:1px solid #a6a6b2"></div>
<div style="left:702.2px;top:263.9px;width:72.2px;height:12.5px;background:#f6f6f9;border-right:1px solid #d8d8e0;border-bottom:1px solid #d8d8e0"></div>
<div style="left:774.4px;top:275.4px;width:81.6px;height:1px;background:#d8d8e0"></div>
<span class="t" style="left:715px;top:265px;font-size:8.5px;line-height:10px;color:#15152a;letter-spacing:-0.83px;">Show Period Grid</span>
<div style="left:811.1px;top:265.85px;width:8.6px;height:8.6px;background:linear-gradient(135deg,#e4e4ea,#fdfdfe);border:1px solid #a6a6b2"></div>
<div style="left:690.8px;top:276.4px;width:165.2px;height:12.4px;background:#8b52fc"></div>
<span class="t" style="left:705px;top:278px;font-size:8.5px;line-height:10px;color:#1c0a4a;letter-spacing:-0.81px;">Labels</span>
<svg style="left:846.4px;top:281px;" width="5.6" height="3.4" viewBox="0 0 5.6 3.4"><path d="M0.4 3l2.4-2.4L5.2 3" fill="none" stroke="#d8c4ff" stroke-width="0.9"/></svg>
<div style="left:690.8px;top:288.8px;width:11.4px;height:66.6px;background:#8b52fc"></div>
<div style="left:702.2px;top:289px;width:72.2px;height:13.4px;background:#f6f6f9;border-right:1px solid #d8d8e0;border-bottom:1px solid #d8d8e0"></div>
<div style="left:774.4px;top:301.4px;width:81.6px;height:1px;background:#d8d8e0"></div>
<span class="t" style="left:715px;top:291px;font-size:8.5px;line-height:10px;color:#15152a;letter-spacing:-0.33px;">Tooltip</span>
<span class="t" style="left:777px;top:291px;font-size:8.5px;line-height:10px;color:#15152a;letter-spacing:-0.36px;">Tooltip</span>
<svg style="left:848.4px;top:294.3px;" width="5" height="3.4" viewBox="0 0 5 3.4"><path d="M0.2 0.2h4.6L2.5 3.2z" fill="#1a1a2a"/></svg>
<div style="left:702.2px;top:302.4px;width:72.2px;height:13.2px;background:#f6f6f9;border-right:1px solid #d8d8e0;border-bottom:1px solid #d8d8e0"></div>
<div style="left:774.4px;top:314.6px;width:81.6px;height:1px;background:#d8d8e0"></div>
<span class="t" style="left:715px;top:304px;font-size:8.5px;line-height:10px;color:#15152a;letter-spacing:-0.73px;">Above</span>
<span class="t" style="left:777px;top:304px;font-size:8.5px;line-height:10px;color:#15152a;letter-spacing:-0.73px;">Label Above</span>
<svg style="left:848.4px;top:307.6px;" width="5" height="3.4" viewBox="0 0 5 3.4"><path d="M0.2 0.2h4.6L2.5 3.2z" fill="#1a1a2a"/></svg>
<div style="left:702.2px;top:315.6px;width:72.2px;height:13.2px;background:#f6f6f9;border-right:1px solid #d8d8e0;border-bottom:1px solid #d8d8e0"></div>
<div style="left:774.4px;top:327.8px;width:81.6px;height:1px;background:#d8d8e0"></div>
<span class="t" style="left:715px;top:317px;font-size:8.5px;line-height:10px;color:#15152a;letter-spacing:-0.5px;">Inside</span>
<span class="t" style="left:777px;top:317px;font-size:8.5px;line-height:10px;color:#15152a;letter-spacing:-0.7px;">Label Inside</span>
<svg style="left:848.4px;top:320.8px;" width="5" height="3.4" viewBox="0 0 5 3.4"><path d="M0.2 0.2h4.6L2.5 3.2z" fill="#1a1a2a"/></svg>
<div style="left:702.2px;top:328.8px;width:72.2px;height:13.2px;background:#f6f6f9;border-right:1px solid #d8d8e0;border-bottom:1px solid #d8d8e0"></div>
<div style="left:774.4px;top:341px;width:81.6px;height:1px;background:#d8d8e0"></div>
<span class="t" style="left:715px;top:330px;font-size:8.5px;line-height:10px;color:#15152a;letter-spacing:-0.46px;">Right</span>
<span class="t" style="left:777px;top:330px;font-size:8.5px;line-height:10px;color:#15152a;letter-spacing:-0.52px;">(none)</span>
<svg style="left:848.4px;top:334px;" width="5" height="3.4" viewBox="0 0 5 3.4"><path d="M0.2 0.2h4.6L2.5 3.2z" fill="#1a1a2a"/></svg>
<div style="left:702.2px;top:342px;width:72.2px;height:13.4px;background:#f6f6f9;border-right:1px solid #d8d8e0;border-bottom:1px solid #d8d8e0"></div>
<div style="left:774.4px;top:354.4px;width:81.6px;height:1px;background:#d8d8e0"></div>
<span class="t" style="left:715px;top:344px;font-size:8.5px;line-height:10px;color:#15152a;letter-spacing:-0.94px;">Below</span>
<span class="t" style="left:777px;top:344px;font-size:8.5px;line-height:10px;color:#15152a;letter-spacing:-0.52px;">(none)</span>
<svg style="left:848.4px;top:347.3px;" width="5" height="3.4" viewBox="0 0 5 3.4"><path d="M0.2 0.2h4.6L2.5 3.2z" fill="#1a1a2a"/></svg>
<div style="left:690.8px;top:355.4px;width:165.2px;height:12.6px;background:#59ffd3"></div>
<span class="t" style="left:705px;top:357px;font-size:8.5px;line-height:10px;color:#0a3a30;letter-spacing:-0.53px;">Shading</span>
<svg style="left:846.4px;top:360.1px;" width="5.6" height="3.4" viewBox="0 0 5.6 3.4"><path d="M0.4 3l2.4-2.4L5.2 3" fill="none" stroke="#4fae98" stroke-width="0.9"/></svg>
<div style="left:690.8px;top:368px;width:11.4px;height:13.4px;background:#59ffd3"></div>
<div style="left:702.2px;top:368px;width:72.2px;height:13.4px;background:#f6f6f9;border-right:1px solid #d8d8e0;border-bottom:1px solid #d8d8e0"></div>
<div style="left:774.4px;top:380.4px;width:81.6px;height:1px;background:#d8d8e0"></div>
<span class="t" style="left:715px;top:370px;font-size:8.5px;line-height:10px;color:#15152a;letter-spacing:-0.8px;">Shading</span>
<div style="left:774.2px;top:368.4px;width:70.2px;height:12.6px;border:1px dotted #55556a"></div>
<span class="t" style="left:777px;top:370px;font-size:8.5px;line-height:10px;color:#15152a;letter-spacing:-0.78px;">Parcel</span>
<div style="left:845.6px;top:369.6px;width:9.8px;height:10.8px;background:linear-gradient(#f0f0f4,#dcdce3);border:1px solid #b4b4bf"></div>
<svg style="left:848px;top:373.6px;" width="5" height="3.4" viewBox="0 0 5 3.4"><path d="M0.2 0.2h4.6L2.5 3.2z" fill="#1a1a2a"/></svg>
<div style="left:690.8px;top:381.4px;width:165.2px;height:12.8px;background:#efff4f"></div>
<span class="t" style="left:705px;top:383px;font-size:8.5px;line-height:10px;color:#2e3200;letter-spacing:-0.74px;">Font Sizes</span>
<svg style="left:846.4px;top:386.2px;" width="5.6" height="3.4" viewBox="0 0 5.6 3.4"><path d="M0.4 3l2.4-2.4L5.2 3" fill="none" stroke="#fbffd0" stroke-width="0.9"/></svg>
<div style="left:690.8px;top:394.2px;width:11.4px;height:94.6px;background:#efff4f"></div>
<div style="left:702.2px;top:394.4px;width:72.2px;height:11.8px;background:#f6f6f9;border-right:1px solid #d8d8e0;border-bottom:1px solid #d8d8e0"></div>
<div style="left:774.4px;top:405.2px;width:81.6px;height:1px;background:#d8d8e0"></div>
<span class="t" style="left:715px;top:395px;font-size:8.5px;line-height:10px;color:#15152a;letter-spacing:-0.77px;">Label Above</span>
<span class="t" style="left:777px;top:395px;font-size:8.5px;line-height:10px;color:#15152a;">8</span>
<div style="left:702.2px;top:406.2px;width:72.2px;height:11.8px;background:#f6f6f9;border-right:1px solid #d8d8e0;border-bottom:1px solid #d8d8e0"></div>
<div style="left:774.4px;top:417px;width:81.6px;height:1px;background:#d8d8e0"></div>
<span class="t" style="left:715px;top:407px;font-size:8.5px;line-height:10px;color:#15152a;letter-spacing:-0.7px;">Label Inside</span>
<span class="t" style="left:777px;top:407px;font-size:8.5px;line-height:10px;color:#15152a;">8</span>
<div style="left:702.2px;top:418px;width:72.2px;height:11.8px;background:#f6f6f9;border-right:1px solid #d8d8e0;border-bottom:1px solid #d8d8e0"></div>
<div style="left:774.4px;top:428.8px;width:81.6px;height:1px;background:#d8d8e0"></div>
<span class="t" style="left:715px;top:419px;font-size:8.5px;line-height:10px;color:#15152a;letter-spacing:-0.71px;">Label Right</span>
<span class="t" style="left:777px;top:419px;font-size:8.5px;line-height:10px;color:#15152a;">8</span>
<div style="left:702.2px;top:429.8px;width:72.2px;height:11.8px;background:#f6f6f9;border-right:1px solid #d8d8e0;border-bottom:1px solid #d8d8e0"></div>
<div style="left:774.4px;top:440.6px;width:81.6px;height:1px;background:#d8d8e0"></div>
<span class="t" style="left:715px;top:431px;font-size:8.5px;line-height:10px;color:#15152a;letter-spacing:-0.89px;">Label Below</span>
<span class="t" style="left:777px;top:430px;font-size:8.5px;line-height:10px;color:#15152a;">8</span>
<div style="left:702.2px;top:441.6px;width:72.2px;height:11.8px;background:#f6f6f9;border-right:1px solid #d8d8e0;border-bottom:1px solid #d8d8e0"></div>
<div style="left:774.4px;top:452.4px;width:81.6px;height:1px;background:#d8d8e0"></div>
<span class="t" style="left:715px;top:443px;font-size:8.5px;line-height:10px;color:#15152a;letter-spacing:-0.84px;">Sequence Bars</span>
<span class="t" style="left:777px;top:442px;font-size:8.5px;line-height:10px;color:#15152a;">8</span>
<div style="left:702.2px;top:453.4px;width:72.2px;height:11.8px;background:#f6f6f9;border-right:1px solid #d8d8e0;border-bottom:1px solid #d8d8e0"></div>
<div style="left:774.4px;top:464.2px;width:81.6px;height:1px;background:#d8d8e0"></div>
<span class="t" style="left:715px;top:454px;font-size:8.5px;line-height:10px;color:#15152a;letter-spacing:-0.75px;">Graph Axes</span>
<span class="t" style="left:777px;top:454px;font-size:8.5px;line-height:10px;color:#15152a;">8</span>
<div style="left:702.2px;top:465.2px;width:72.2px;height:11.8px;background:#f6f6f9;border-right:1px solid #d8d8e0;border-bottom:1px solid #d8d8e0"></div>
<div style="left:774.4px;top:476px;width:81.6px;height:1px;background:#d8d8e0"></div>
<span class="t" style="left:715px;top:466px;font-size:8.5px;line-height:10px;color:#15152a;letter-spacing:-0.98px;">Time Row</span>
<span class="t" style="left:777px;top:466px;font-size:8.5px;line-height:10px;color:#15152a;">8</span>
<div style="left:702.2px;top:477px;width:72.2px;height:11.8px;background:#f6f6f9;border-right:1px solid #d8d8e0;border-bottom:1px solid #d8d8e0"></div>
<div style="left:774.4px;top:487.8px;width:81.6px;height:1px;background:#d8d8e0"></div>
<span class="t" style="left:715px;top:478px;font-size:8.5px;line-height:10px;color:#15152a;letter-spacing:-0.72px;">Headers</span>
<span class="t" style="left:777px;top:478px;font-size:8.5px;line-height:10px;color:#15152a;">8</span>
<div style="left:774px;top:380.6px;width:82.4px;height:35px;background:#fff;border:1px solid #8e8e9c;box-shadow:1px 1px 2px rgba(0,0,0,0.3)"></div>
<span class="t" style="left:777.6px;top:382px;font-size:8.5px;line-height:10px;color:#15152a;letter-spacing:-0.52px;">(none)</span>
<span class="t" style="left:777.6px;top:392px;font-size:8.5px;line-height:10px;color:#15152a;letter-spacing:-0.23px;">&lt;Default&gt;</span>
<div style="left:775px;top:401.4px;width:80px;height:13px;background:#e6e6ea"></div>
<span class="t" style="left:777.4px;top:402px;font-size:8.5px;line-height:10px;color:#15152a;letter-spacing:-0.9px;">Parcel</span>
<div class="red" style="left:772.2px;top:398.4px;width:86px;height:18.4px;border-width:3.7px;border-radius:4.5px"></div>
<div class="red" style="left:843.8px;top:368px;width:13.8px;height:15px;border-radius:3px"></div>
<div class="red" style="left:683px;top:183px;width:73px;height:14.8px"></div>
<div style="left:866.4px;top:185px;width:250px;height:413px;border:1px solid #d8d8df;border-radius:3px"></div>
<div style="left:868.2px;top:196.6px;width:246.2px;height:398.4px;border:1px solid #cbcbd4;border-radius:2px"></div>
<span class="t" style="left:874px;top:186px;font-size:8.5px;line-height:10px;color:#23233a;letter-spacing:-0.86px;">Visible Rows</span>
<div style="left:869.8px;top:200.2px;width:239px;height:282.8px;background:#fff;border:1px solid #a4a4b0"></div>
<div class="hdr" style="left:870.8px;top:201.2px;width:237px;height:12.8px"></div>
<div style="left:870.8px;top:201.2px;width:10.4px;height:237.4px;background:#f1f1f5;border-right:1px solid #cdcdd6"></div>
<div style="left:958.8px;top:201.2px;width:1px;height:237.4px;background:#d4d4dc"></div>
<span class="t" style="left:883.4px;top:202px;font-size:8.5px;line-height:10px;letter-spacing:-1px;">Name</span>
<span class="t" style="left:961.8px;top:202px;font-size:8.5px;line-height:10px;letter-spacing:-1px;">Rows</span>
<div style="left:881.2px;top:214px;width:226.6px;height:13.2px;background:#ececf1"></div>
<div style="left:870.8px;top:226.7px;width:237px;height:1px;background:#d6d6de"></div>
<span class="t" style="left:883.4px;top:216px;font-size:8.5px;line-height:10px;color:#15152a;letter-spacing:-0.58px;">Blasting</span>
<span class="t" style="left:961.8px;top:216px;font-size:8.5px;line-height:10px;color:#15152a;letter-spacing:-0.78px;">Windows, Blasts</span>
<svg style="left:1100px;top:219.4px;" width="5" height="3.4" viewBox="0 0 5 3.4"><path d="M0.2 0.2h4.6L2.5 3.2z" fill="#1a1a2a"/></svg>
<div style="left:870.8px;top:239.9px;width:237px;height:1px;background:#d6d6de"></div>
<span class="t" style="left:883.4px;top:229px;font-size:8.5px;line-height:10px;color:#15152a;letter-spacing:-0.72px;">Trucks</span>
<span class="t" style="left:961.8px;top:229px;font-size:8.5px;line-height:10px;color:#15152a;letter-spacing:-0.76px;">Trucks</span>
<svg style="left:1100px;top:232.6px;" width="5" height="3.4" viewBox="0 0 5 3.4"><path d="M0.2 0.2h4.6L2.5 3.2z" fill="#1a1a2a"/></svg>
<div style="left:870.8px;top:253.1px;width:237px;height:1px;background:#d6d6de"></div>
<span class="t" style="left:883.4px;top:242px;font-size:8.5px;line-height:10px;color:#15152a;letter-spacing:-1px;">EX001</span>
<span class="t" style="left:961.8px;top:242px;font-size:8.5px;line-height:10px;color:#15152a;letter-spacing:-0.66px;">Sequence, Sources</span>
<svg style="left:1100px;top:245.8px;" width="5" height="3.4" viewBox="0 0 5 3.4"><path d="M0.2 0.2h4.6L2.5 3.2z" fill="#1a1a2a"/></svg>
<div style="left:870.8px;top:266.3px;width:237px;height:1px;background:#d6d6de"></div>
<span class="t" style="left:883.4px;top:255px;font-size:8.5px;line-height:10px;color:#15152a;letter-spacing:-1px;">EX002</span>
<span class="t" style="left:961.8px;top:255px;font-size:8.5px;line-height:10px;color:#15152a;letter-spacing:-0.56px;">Sequence, Sources, Destinations, Gra...</span>
<svg style="left:1100px;top:259px;" width="5" height="3.4" viewBox="0 0 5 3.4"><path d="M0.2 0.2h4.6L2.5 3.2z" fill="#1a1a2a"/></svg>
<div style="left:870.8px;top:279.5px;width:237px;height:1px;background:#d6d6de"></div>
<span class="t" style="left:883.4px;top:269px;font-size:8.5px;line-height:10px;color:#15152a;letter-spacing:-1px;">EX003</span>
<span class="t" style="left:961.8px;top:269px;font-size:8.5px;line-height:10px;color:#15152a;letter-spacing:-0.56px;">Sequence, Sources, Destinations, Gra...</span>
<svg style="left:1100px;top:272.2px;" width="5" height="3.4" viewBox="0 0 5 3.4"><path d="M0.2 0.2h4.6L2.5 3.2z" fill="#1a1a2a"/></svg>
<div style="left:870.8px;top:292.7px;width:237px;height:1px;background:#d6d6de"></div>
<span class="t" style="left:883.4px;top:282px;font-size:8.5px;line-height:10px;color:#15152a;letter-spacing:-1px;">EX004</span>
<span class="t" style="left:961.8px;top:282px;font-size:8.5px;line-height:10px;color:#15152a;letter-spacing:-0.56px;">Sequence, Sources, Destinations, Gra...</span>
<svg style="left:1100px;top:285.4px;" width="5" height="3.4" viewBox="0 0 5 3.4"><path d="M0.2 0.2h4.6L2.5 3.2z" fill="#1a1a2a"/></svg>
<div style="left:870.8px;top:305.9px;width:237px;height:1px;background:#d6d6de"></div>
<span class="t" style="left:883.4px;top:295px;font-size:8.5px;line-height:10px;color:#15152a;letter-spacing:-0.66px;">CAT994_1</span>
<span class="t" style="left:961.8px;top:295px;font-size:8.5px;line-height:10px;color:#15152a;letter-spacing:-0.56px;">Sequence, Sources, Destinations, Gra...</span>
<svg style="left:1100px;top:298.6px;" width="5" height="3.4" viewBox="0 0 5 3.4"><path d="M0.2 0.2h4.6L2.5 3.2z" fill="#1a1a2a"/></svg>
<div style="left:870.8px;top:319.1px;width:237px;height:1px;background:#d6d6de"></div>
<span class="t" style="left:883.4px;top:308px;font-size:8.5px;line-height:10px;color:#15152a;letter-spacing:-0.66px;">CAT994_2</span>
<span class="t" style="left:961.8px;top:308px;font-size:8.5px;line-height:10px;color:#15152a;letter-spacing:-0.56px;">Sequence, Sources, Destinations, Gra...</span>
<svg style="left:1100px;top:311.8px;" width="5" height="3.4" viewBox="0 0 5 3.4"><path d="M0.2 0.2h4.6L2.5 3.2z" fill="#1a1a2a"/></svg>
<div style="left:870.8px;top:332.3px;width:237px;height:1px;background:#d6d6de"></div>
<span class="t" style="left:883.4px;top:321px;font-size:8.5px;line-height:10px;color:#15152a;letter-spacing:-0.98px;">D651</span>
<span class="t" style="left:961.8px;top:321px;font-size:8.5px;line-height:10px;color:#15152a;letter-spacing:-0.6px;">Sequence, Sources, Graphs, Other U...</span>
<svg style="left:1100px;top:325px;" width="5" height="3.4" viewBox="0 0 5 3.4"><path d="M0.2 0.2h4.6L2.5 3.2z" fill="#1a1a2a"/></svg>
<div style="left:870.8px;top:345.5px;width:237px;height:1px;background:#d6d6de"></div>
<span class="t" style="left:883.4px;top:335px;font-size:8.5px;line-height:10px;color:#15152a;letter-spacing:-0.74px;">Cubex1</span>
<span class="t" style="left:961.8px;top:335px;font-size:8.5px;line-height:10px;color:#15152a;letter-spacing:-0.6px;">Sequence, Sources, Graphs, Other U...</span>
<svg style="left:1100px;top:338.2px;" width="5" height="3.4" viewBox="0 0 5 3.4"><path d="M0.2 0.2h4.6L2.5 3.2z" fill="#1a1a2a"/></svg>
<div style="left:870.8px;top:358.7px;width:237px;height:1px;background:#d6d6de"></div>
<span class="t" style="left:883.4px;top:348px;font-size:8.5px;line-height:10px;color:#15152a;letter-spacing:-0.74px;">Cubex2</span>
<span class="t" style="left:961.8px;top:348px;font-size:8.5px;line-height:10px;color:#15152a;letter-spacing:-0.6px;">Sequence, Sources, Graphs, Other U...</span>
<svg style="left:1100px;top:351.4px;" width="5" height="3.4" viewBox="0 0 5 3.4"><path d="M0.2 0.2h4.6L2.5 3.2z" fill="#1a1a2a"/></svg>
<div style="left:870.8px;top:371.9px;width:237px;height:1px;background:#d6d6de"></div>
<span class="t" style="left:883.4px;top:361px;font-size:8.5px;line-height:10px;color:#15152a;letter-spacing:-0.62px;">PitViper1</span>
<span class="t" style="left:961.8px;top:361px;font-size:8.5px;line-height:10px;color:#15152a;letter-spacing:-0.6px;">Sequence, Sources, Graphs, Other U...</span>
<svg style="left:1100px;top:364.6px;" width="5" height="3.4" viewBox="0 0 5 3.4"><path d="M0.2 0.2h4.6L2.5 3.2z" fill="#1a1a2a"/></svg>
<div style="left:870.8px;top:385.1px;width:237px;height:1px;background:#d6d6de"></div>
<span class="t" style="left:883.4px;top:374px;font-size:8.5px;line-height:10px;color:#15152a;letter-spacing:-0.62px;">PitViper2</span>
<span class="t" style="left:961.8px;top:374px;font-size:8.5px;line-height:10px;color:#15152a;letter-spacing:-0.6px;">Sequence, Sources, Graphs, Other U...</span>
<svg style="left:1100px;top:377.8px;" width="5" height="3.4" viewBox="0 0 5 3.4"><path d="M0.2 0.2h4.6L2.5 3.2z" fill="#1a1a2a"/></svg>
<div style="left:870.8px;top:398.3px;width:237px;height:1px;background:#d6d6de"></div>
<span class="t" style="left:883.4px;top:387px;font-size:8.5px;line-height:10px;color:#15152a;letter-spacing:-0.62px;">PitViper3</span>
<span class="t" style="left:961.8px;top:387px;font-size:8.5px;line-height:10px;color:#15152a;letter-spacing:-0.6px;">Sequence, Sources, Graphs, Other U...</span>
<svg style="left:1100px;top:391px;" width="5" height="3.4" viewBox="0 0 5 3.4"><path d="M0.2 0.2h4.6L2.5 3.2z" fill="#1a1a2a"/></svg>
<div style="left:870.8px;top:411.5px;width:237px;height:1px;background:#d6d6de"></div>
<span class="t" style="left:883.4px;top:401px;font-size:8.5px;line-height:10px;color:#15152a;letter-spacing:-0.62px;">PitViper4</span>
<span class="t" style="left:961.8px;top:401px;font-size:8.5px;line-height:10px;color:#15152a;letter-spacing:-0.6px;">Sequence, Sources, Graphs, Other U...</span>
<svg style="left:1100px;top:404.2px;" width="5" height="3.4" viewBox="0 0 5 3.4"><path d="M0.2 0.2h4.6L2.5 3.2z" fill="#1a1a2a"/></svg>
<div style="left:870.8px;top:424.7px;width:237px;height:1px;background:#d6d6de"></div>
<span class="t" style="left:883.4px;top:414px;font-size:8.5px;line-height:10px;color:#15152a;letter-spacing:-0.62px;">PitViper5</span>
<span class="t" style="left:961.8px;top:414px;font-size:8.5px;line-height:10px;color:#15152a;letter-spacing:-0.6px;">Sequence, Sources, Graphs, Other U...</span>
<svg style="left:1100px;top:417.4px;" width="5" height="3.4" viewBox="0 0 5 3.4"><path d="M0.2 0.2h4.6L2.5 3.2z" fill="#1a1a2a"/></svg>
<div style="left:870.8px;top:437.9px;width:237px;height:1px;background:#d6d6de"></div>
<span class="t" style="left:883.4px;top:427px;font-size:8.5px;line-height:10px;color:#15152a;letter-spacing:-0.62px;">PitViper6</span>
<span class="t" style="left:961.8px;top:427px;font-size:8.5px;line-height:10px;color:#15152a;letter-spacing:-0.6px;">Sequence, Sources, Graphs, Other U...</span>
<svg style="left:1100px;top:430.6px;" width="5" height="3.4" viewBox="0 0 5 3.4"><path d="M0.2 0.2h4.6L2.5 3.2z" fill="#1a1a2a"/></svg>
<svg style="left:874.6px;top:218px;" width="3.4" height="5.4" viewBox="0 0 3.4 5.4"><path d="M0.3 0.2l2.8 2.5-2.8 2.5z" fill="#1a1a2a"/></svg>
<div style="left:984px;top:485.8px;width:1.2px;height:1.2px;background:#9c9cab"></div>
<div style="left:986.2px;top:485.8px;width:1.2px;height:1.2px;background:#9c9cab"></div>
<div style="left:988.4px;top:485.8px;width:1.2px;height:1.2px;background:#9c9cab"></div>
<div style="left:990.6px;top:485.8px;width:1.2px;height:1.2px;background:#9c9cab"></div>
<div style="left:992.8px;top:485.8px;width:1.2px;height:1.2px;background:#9c9cab"></div>
<div style="left:872.2px;top:492.4px;width:235.4px;height:97.4px;background:#fff;border:1px solid #a4a4b0"></div>
<div style="left:873.2px;top:493.4px;width:116.8px;height:24px;background:#f6f6f9"></div>
<div style="left:873.2px;top:504.8px;width:233.4px;height:1px;background:#d8d8e0"></div>
<div style="left:873.2px;top:517px;width:233.4px;height:1px;background:#d8d8e0"></div>
<div style="left:990px;top:493.4px;width:1px;height:24px;background:#d8d8e0"></div>
<span class="t" style="left:885px;top:494px;font-size:8.5px;line-height:10px;color:#8f8fa0;letter-spacing:-1px;">Name</span>
<span class="t" style="left:993px;top:494px;font-size:8.5px;line-height:10px;color:#8f8fa0;letter-spacing:-0.61px;">Blasting</span>
<span class="t" style="left:885px;top:506px;font-size:8.5px;line-height:10px;color:#15152a;letter-spacing:-1px;">Rows</span>
<span class="t" style="left:993px;top:506px;font-size:8.5px;line-height:10px;color:#15152a;letter-spacing:-0.69px;">Windows, Blasts</span>
<svg style="left:1097.6px;top:510px;" width="5" height="3.4" viewBox="0 0 5 3.4"><path d="M0.2 0.2h4.6L2.5 3.2z" fill="#1a1a2a"/></svg>
<div class="btn" style="left:912.4px;top:602px;width:83px;height:15.6px"></div>
<div class="btn" style="left:1001px;top:602px;width:57.2px;height:15.6px"></div>
<div class="btn" style="left:1061px;top:602px;width:57.6px;height:15.6px"></div>
<svg style="left:915.4px;top:603.8px;" width="11" height="11" viewBox="0 0 11 11"><rect x="0.6" y="0.6" width="7.4" height="6.4" fill="#eef2fb" stroke="#7d8bb8" stroke-width="0.8"/><circle cx="6" cy="6" r="2.6" fill="#dfe8f8" stroke="#4a5a88" stroke-width="0.9"/><path d="M7.8 7.8l2.6 2.6" stroke="#4a5a88" stroke-width="1.4"/></svg>
<span class="t" style="left:927.6px;top:605px;font-size:8.5px;line-height:10px;color:#15152a;letter-spacing:-0.68px;">Edit Global Settings</span>
<svg style="left:1004.2px;top:604.6px;" width="10" height="10" viewBox="0 0 10 10"><path d="M1 1.4l8 7.4M9 1.2L1.2 9" stroke="#cf2a20" stroke-width="2.7" stroke-linecap="round"/></svg>
<span class="t" style="left:1024.6px;top:605px;font-size:8.5px;line-height:10px;color:#15152a;letter-spacing:-0.73px;">Cancel</span>
<svg style="left:1064.4px;top:604.2px;" width="11" height="11" viewBox="0 0 11 11"><path d="M1 6.2l3 3.6L10 1" fill="none" stroke="#66ac22" stroke-width="2.7" stroke-linecap="round" stroke-linejoin="round"/></svg>
<span class="t" style="left:1091.4px;top:605px;font-size:8.5px;line-height:10px;color:#15152a;letter-spacing:-1px;">OK</span>
<svg style="left:495px;top:145px" width="45" height="24" viewBox="495 145 45 24"><path d="M504 151.9L519 158.4" stroke="#ff0000" stroke-width="2.9"/><path d="M532.8 163.7L512 162.9 516.2 149.8z" fill="#ff0000"/></svg>
<svg style="left:455.2px;top:134.6px;" width="9.6" height="14.6" viewBox="0 0 9.6 14.6"><path d="M0.6 0.6v10.6l2.5-2.3 1.7 4 1.7-0.7-1.7-3.9h3.4z" fill="#fff" stroke="#111" stroke-width="0.8" stroke-linejoin="round"/></svg>
<svg style="left:829px;top:409.6px;" width="9.6" height="14.6" viewBox="0 0 9.6 14.6"><path d="M0.6 0.6v10.6l2.5-2.3 1.7 4 1.7-0.7-1.7-3.9h3.4z" fill="#fff" stroke="#111" stroke-width="0.8" stroke-linejoin="round"/></svg>
</div></body></html>
